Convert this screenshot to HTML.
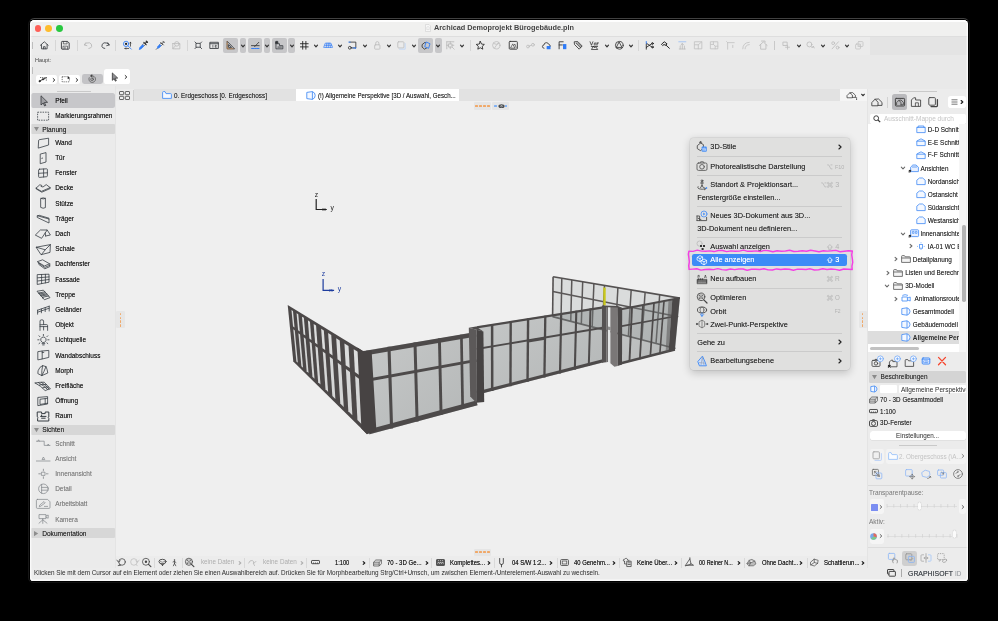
<!DOCTYPE html>
<html><head><meta charset="utf-8"><title>Archicad</title>
<style>
*{box-sizing:border-box;margin:0;padding:0}
html,body{width:998px;height:621px;overflow:hidden;background:#000;font-family:"Liberation Sans",sans-serif;}
.a{position:absolute}
.t{white-space:nowrap}
svg{overflow:visible}
#win{position:absolute;left:28px;top:18px;width:942px;height:565px;border-radius:6.5px 6.5px 5.5px 5.5px;background:#000;border:1px solid;border-color:#404040 #171717 #101010 #171717}
#wi{position:absolute;left:30px;top:20px;width:938px;height:561px;border-radius:4.6px 4.6px 3.6px 3.6px;background:#ececec;overflow:hidden}
#o{position:absolute;left:-30px;top:-20px;width:998px;height:621px;will-change:transform;opacity:0.9999}
#ring{position:absolute;left:0;top:0;width:938px;height:561px;border-radius:4.6px 4.6px 3.6px 3.6px;box-shadow:inset 0 0 0 1.4px rgba(255,255,255,.72);pointer-events:none}
</style></head><body>
<div id="win"></div>
<div id="wi"><div id="o">
<div class="a" style="left:30.00px;top:20.00px;width:938.00px;height:16.40px;background:#f0f0ef;border-radius:0px;"></div>
<div class="a" style="left:30.00px;top:20.00px;width:938.00px;height:1.60px;background:#fcfcfc;border-radius:0px;"></div>
<div class="a" style="left:30.00px;top:36.20px;width:938.00px;height:0.80px;background:#dedede;border-radius:0px;"></div>
<div class="a" style="left:34.6px;top:25.0px;width:6.8px;height:6.8px;border-radius:50%;background:#fe5f57"></div>
<div class="a" style="left:45.4px;top:25.0px;width:6.8px;height:6.8px;border-radius:50%;background:#febc2e"></div>
<div class="a" style="left:56.2px;top:25.0px;width:6.8px;height:6.8px;border-radius:50%;background:#28c840"></div>
<div class="a" style="left:30.00px;top:37.00px;width:938.00px;height:18.00px;background:#ebebeb;border-radius:0px;"></div>
<div class="a" style="left:869.50px;top:37.00px;width:98.50px;height:18.00px;background:#e4e4e4;border-radius:0px;"></div>
<div class="a" style="left:30.00px;top:55.00px;width:938.00px;height:34.00px;background:#e9e9e9;border-radius:0px;"></div>
<div class="a" style="left:115.80px;top:101.00px;width:751.70px;height:455.00px;background:#efefef;border-radius:0px;"></div>
<svg class="a" style="left:425px;top:24px" width="6" height="8" viewBox="0 0 6 8" fill="#f7f7f7" stroke="#c9c9c9" stroke-width="0.5"><path d="M0.5 0.5 H4 L5.5 2 V7.5 H0.5 Z"/><path d="M1.8 3.2 L3 2.4 L4.2 3.2 V5.6 H1.8 Z" stroke="#cfcfcf" fill="none"/></svg>
<div class="a t" style="left:434.00px;top:24.42px;height:8.76px;line-height:8.76px;font-size:7.3px;color:#444444;font-weight:bold;transform:scaleX(1.0004);transform-origin:left center;">Archicad Demoprojekt Bürogebäude.pln</div>
<div class="a" style="left:32.30px;top:41.50px;width:0.70px;height:7.50px;background:#bdbdbd;border-radius:0px;"></div>
<div class="a" style="left:32.30px;top:66.50px;width:0.70px;height:7.50px;background:#bdbdbd;border-radius:0px;"></div>
<svg class="a" style="left:38.80px;top:40.20px;" width="10.6" height="10.6" viewBox="0 0 12 12" fill="none" stroke="#3a3d42" stroke-width="0.95" stroke-linecap="round" stroke-linejoin="round"><path d="M1.6 6 L6 2 L10.4 6 M2.8 5.2 V10 H9.2 V5.2 M5 10 V7.6 H7 V10"/></svg>
<div class="a" style="left:54.80px;top:40.00px;width:0.80px;height:10.50px;background:#d6d6d6;border-radius:0px;"></div>
<svg class="a" style="left:60.20px;top:40.20px;" width="10.6" height="10.6" viewBox="0 0 12 12" fill="none" stroke="#3a3d42" stroke-width="0.95" stroke-linecap="round" stroke-linejoin="round"><path d="M1.6 2.4 Q1.6 1.6 2.4 1.6 H8.6 L10.4 3.4 V9.6 Q10.4 10.4 9.6 10.4 H2.4 Q1.6 10.4 1.6 9.6 Z" stroke-width="1.05"/><path d="M3.8 1.8 V4.4 H8 V1.8 M3.4 10.2 V7 H8.6 V10.2" stroke-width="0.75"/><path d="M5.6 8.2 V10" stroke-width="1.2" stroke-linecap="butt"/></svg>
<div class="a" style="left:76.90px;top:40.00px;width:0.80px;height:10.50px;background:#d6d6d6;border-radius:0px;"></div>
<svg class="a" style="left:83.00px;top:40.20px;" width="10.6" height="10.6" viewBox="0 0 12 12" fill="none" stroke="#b4b4b4" stroke-width="0.95" stroke-linecap="round" stroke-linejoin="round"><path d="M3.2 3 L1.4 5.6 L4.4 6.4 M1.6 5.4 Q4 2.4 7.4 3.2 Q10.4 4.4 9.8 7.4 Q9 9.6 6.6 9.6"/></svg>
<svg class="a" style="left:99.50px;top:40.20px;" width="10.6" height="10.6" viewBox="0 0 12 12" fill="none" stroke="#3a3d42" stroke-width="0.95" stroke-linecap="round" stroke-linejoin="round"><path d="M8.8 3 L10.6 5.6 L7.6 6.4 M10.4 5.4 Q8 2.4 4.6 3.2 Q1.6 4.4 2.2 7.4 Q3 9.6 5.4 9.6"/></svg>
<div class="a" style="left:115.20px;top:40.00px;width:0.80px;height:10.50px;background:#d6d6d6;border-radius:0px;"></div>
<svg class="a" style="left:121.50px;top:40.20px;" width="10.6" height="10.6" viewBox="0 0 12 12" fill="none" stroke="#3a3d42" stroke-width="0.95" stroke-linecap="round" stroke-linejoin="round"><circle cx="4.6" cy="4.4" r="3" stroke="#2f7bf6"/><path d="M6.8 6.6 L10.6 10.4" stroke="#2f7bf6"/><circle cx="4.6" cy="4.4" r="1.3" fill="#222" stroke="none"/><path d="M9.6 2.6 V7 M8.8 3.4 L9.6 2.6 L10.4 3.4 M3.4 9.6 H7.6 M4.2 8.8 L3.4 9.6 L4.2 10.4" stroke="#222" stroke-width="0.8"/></svg>
<svg class="a" style="left:137.70px;top:40.20px;" width="10.6" height="10.6" viewBox="0 0 12 12" fill="none" stroke="#3a3d42" stroke-width="0.95" stroke-linecap="round" stroke-linejoin="round"><path d="M5.2 5.4 L7.4 3.2 L8.8 4.6 L6.6 6.8" fill="#fff" stroke="#333" stroke-width="0.8"/><path d="M1.6 10.4 L2.2 8.4 L5.2 5.4 L6.6 6.8 L3.6 9.8 Z" fill="#2f7bf6" stroke="#2f7bf6"/><path d="M6.6 2.6 L9.4 5.4 M8.2 3.8 L10 2" stroke="#333" stroke-width="1.2"/><path d="M9.4 1.4 L10.6 2.6" stroke="#333" stroke-width="1.6"/></svg>
<svg class="a" style="left:154.50px;top:40.20px;" width="10.6" height="10.6" viewBox="0 0 12 12" fill="none" stroke="#3a3d42" stroke-width="0.95" stroke-linecap="round" stroke-linejoin="round"><path d="M1.4 10.6 L3 9" stroke="#333" stroke-width="0.8"/><path d="M5.4 5.2 L7.2 3.4 L8.6 4.8 L6.8 6.6" fill="#fff" stroke="#333" stroke-width="0.8"/><path d="M3 9 L3.2 7.4 L5.4 5.2 L6.8 6.6 L4.6 8.8 Z" fill="#2f7bf6" stroke="#2f7bf6"/><path d="M6.4 2.6 L9.4 5.6 M8 4 L9.8 2.2 M9 1.4 L10.6 3" stroke="#333" stroke-width="0.9"/></svg>
<svg class="a" style="left:170.50px;top:40.20px;" width="10.6" height="10.6" viewBox="0 0 12 12" fill="none" stroke="#bcbcbc" stroke-width="0.95" stroke-linecap="round" stroke-linejoin="round"><path d="M2 4 H10 V10 H2 Z" stroke-dasharray="1 0.8"/><circle cx="6.6" cy="4.4" r="2.6"/><path d="M2 10 L5 6.6"/></svg>
<div class="a" style="left:186.50px;top:40.00px;width:0.80px;height:10.50px;background:#d6d6d6;border-radius:0px;"></div>
<svg class="a" style="left:192.70px;top:40.20px;" width="10.6" height="10.6" viewBox="0 0 12 12" fill="none" stroke="#3a3d42" stroke-width="0.95" stroke-linecap="round" stroke-linejoin="round"><rect x="3.8" y="3.8" width="4.4" height="4.4"/><path d="M3.8 3.8 L2.2 2.2 M8.2 3.8 L9.8 2.2 M3.8 8.2 L2.2 9.8 M8.2 8.2 L9.8 9.8"/></svg>
<svg class="a" style="left:208.90px;top:40.20px;" width="10.6" height="10.6" viewBox="0 0 12 12" fill="none" stroke="#3a3d42" stroke-width="0.95" stroke-linecap="round" stroke-linejoin="round"><path d="M1.4 2.6 H10.6 V9.6 H1.4 Z M1.4 4.2 H10.6" stroke-width="1"/><path d="M4.4 5.8 V8.2 M7 6 H8.2 V7 H7 V8.2 H8.2" stroke-width="0.8"/></svg>
<div class="a" style="left:223.00px;top:38.20px;width:14.80px;height:14.40px;background:#c7c7c9;border-radius:2px;"></div>
<div class="a" style="left:239.50px;top:38.20px;width:6.40px;height:14.40px;background:#c7c7c9;border-radius:2px;"></div>
<div class="a" style="left:248.00px;top:38.20px;width:13.90px;height:14.40px;background:#c7c7c9;border-radius:2px;"></div>
<div class="a" style="left:264.10px;top:38.20px;width:6.30px;height:14.40px;background:#c7c7c9;border-radius:2px;"></div>
<div class="a" style="left:272.10px;top:38.20px;width:14.90px;height:14.40px;background:#c7c7c9;border-radius:2px;"></div>
<div class="a" style="left:288.20px;top:38.20px;width:6.80px;height:14.40px;background:#c7c7c9;border-radius:2px;"></div>
<div class="a" style="left:418.30px;top:38.20px;width:15.10px;height:14.40px;background:#c7c7c9;border-radius:2px;"></div>
<div class="a" style="left:435.00px;top:38.20px;width:6.90px;height:14.40px;background:#c7c7c9;border-radius:2px;"></div>
<svg class="a" style="left:225.10px;top:40.20px;" width="10.6" height="10.6" viewBox="0 0 12 12" fill="none" stroke="#3a3d42" stroke-width="0.95" stroke-linecap="round" stroke-linejoin="round"><path d="M2.4 1.8 V10 H10.4 Z M4 5.6 V8.4 H7 Z"/><path d="M2.4 1.8 V10 H10.4" stroke="#e8903a" stroke-dasharray="0.8 0.8" stroke-linecap="butt" stroke-width="1.1"/></svg>
<svg class="a" style="left:239.60px;top:42.70px" width="6" height="6" viewBox="0 0 6 6" fill="none" stroke="#333" stroke-width="1.2" stroke-linecap="round" stroke-linejoin="round"><path d="M1.52 2.186 L3 3.814 L4.48 2.186"/></svg>
<svg class="a" style="left:249.70px;top:40.20px;" width="10.6" height="10.6" viewBox="0 0 12 12" fill="none" stroke="#3a3d42" stroke-width="0.95" stroke-linecap="round" stroke-linejoin="round"><path d="M1.6 6.4 H10.4 M5.2 7.6 L10 2.6" stroke="#333"/><path d="M1.8 9.6 H10.2" stroke="#2f7bf6" stroke-dasharray="1.2 0.7" stroke-width="1.1"/></svg>
<svg class="a" style="left:264.00px;top:42.70px" width="6" height="6" viewBox="0 0 6 6" fill="none" stroke="#333" stroke-width="1.2" stroke-linecap="round" stroke-linejoin="round"><path d="M1.52 2.186 L3 3.814 L4.48 2.186"/></svg>
<svg class="a" style="left:274.20px;top:40.20px;" width="10.6" height="10.6" viewBox="0 0 12 12" fill="none" stroke="#3a3d42" stroke-width="0.95" stroke-linecap="round" stroke-linejoin="round"><path d="M2.2 2 V10 H10 V6.4 H6.2 V4.2 H4.2 V2 Z"/><path d="M2.2 2 H4.2 V4.2 H2.2 Z" fill="#333"/><path d="M4.4 8 H8.6" stroke-dasharray="0.8 0.8"/></svg>
<svg class="a" style="left:288.80px;top:42.70px" width="6" height="6" viewBox="0 0 6 6" fill="none" stroke="#333" stroke-width="1.2" stroke-linecap="round" stroke-linejoin="round"><path d="M1.52 2.186 L3 3.814 L4.48 2.186"/></svg>
<svg class="a" style="left:298.60px;top:40.20px;" width="10.6" height="10.6" viewBox="0 0 12 12" fill="none" stroke="#3a3d42" stroke-width="0.95" stroke-linecap="round" stroke-linejoin="round"><path d="M4.2 1.6 V10.4 M7.8 1.6 V10.4 M1.6 4.2 H10.4 M1.6 7.8 H10.4" stroke="#222" stroke-width="1"/></svg>
<svg class="a" style="left:312.90px;top:42.70px" width="6" height="6" viewBox="0 0 6 6" fill="none" stroke="#333" stroke-width="1.2" stroke-linecap="round" stroke-linejoin="round"><path d="M1.52 2.186 L3 3.814 L4.48 2.186"/></svg>
<svg class="a" style="left:323.10px;top:40.20px;" width="10.6" height="10.6" viewBox="0 0 12 12" fill="none" stroke="#3a3d42" stroke-width="0.95" stroke-linecap="round" stroke-linejoin="round"><path d="M3 3.6 H9 L10.8 8.4 H1.2 Z M4.4 3.6 L3.6 8.4 M6 3.6 V8.4 M7.6 3.6 L8.4 8.4 M2.2 6 H9.8" stroke="#2f7bf6" stroke-width="0.8"/></svg>
<svg class="a" style="left:337.20px;top:42.70px" width="6" height="6" viewBox="0 0 6 6" fill="none" stroke="#333" stroke-width="1.2" stroke-linecap="round" stroke-linejoin="round"><path d="M1.52 2.186 L3 3.814 L4.48 2.186"/></svg>
<svg class="a" style="left:346.90px;top:40.20px;" width="10.6" height="10.6" viewBox="0 0 12 12" fill="none" stroke="#3a3d42" stroke-width="0.95" stroke-linecap="round" stroke-linejoin="round"><path d="M3 2.4 H10 V9 H5" stroke="#333"/><circle cx="3.2" cy="8.8" r="1.6" stroke="#333"/><path d="M2 2.4 H3.6" stroke="#2f7bf6"/><circle cx="9.6" cy="9.2" r="0.9" fill="#2f7bf6" stroke="none"/><path d="M6.6 9 H8.4" stroke="#2f7bf6"/></svg>
<svg class="a" style="left:361.70px;top:42.70px" width="6" height="6" viewBox="0 0 6 6" fill="none" stroke="#333" stroke-width="1.2" stroke-linecap="round" stroke-linejoin="round"><path d="M1.52 2.186 L3 3.814 L4.48 2.186"/></svg>
<svg class="a" style="left:372.00px;top:40.20px;" width="10.6" height="10.6" viewBox="0 0 12 12" fill="none" stroke="#bdbdbd" stroke-width="0.95" stroke-linecap="round" stroke-linejoin="round"><rect x="3" y="5.4" width="6" height="5" rx="0.8"/><path d="M4.2 5.4 V3.6 Q4.2 1.8 6 1.8 Q7.8 1.8 7.8 3.6 V5.4"/></svg>
<svg class="a" style="left:386.00px;top:42.70px" width="6" height="6" viewBox="0 0 6 6" fill="none" stroke="#333" stroke-width="1.2" stroke-linecap="round" stroke-linejoin="round"><path d="M1.52 2.186 L3 3.814 L4.48 2.186"/></svg>
<svg class="a" style="left:395.70px;top:40.20px;" width="10.6" height="10.6" viewBox="0 0 12 12" fill="none" stroke="#3a3d42" stroke-width="0.95" stroke-linecap="round" stroke-linejoin="round"><rect x="2" y="2" width="7" height="7" rx="1" stroke="#bdbdbd"/><path d="M10.4 4 V10.4 H4" stroke="#bcd4f5"/></svg>
<svg class="a" style="left:410.60px;top:42.70px" width="6" height="6" viewBox="0 0 6 6" fill="none" stroke="#333" stroke-width="1.2" stroke-linecap="round" stroke-linejoin="round"><path d="M1.52 2.186 L3 3.814 L4.48 2.186"/></svg>
<svg class="a" style="left:420.50px;top:40.20px;" width="10.6" height="10.6" viewBox="0 0 12 12" fill="none" stroke="#3a3d42" stroke-width="0.95" stroke-linecap="round" stroke-linejoin="round"><path d="M1.6 5 L4.6 2.6 L7 4.4 V8.6 L4 10.4 L1.6 8.4 Z" stroke="#333"/><path d="M6.2 2.4 L10.2 4.2 L8.6 9.4 L4.6 7.8 Z" stroke="#2f7bf6" fill="#c7c7c9" stroke-width="1"/></svg>
<svg class="a" style="left:435.40px;top:42.70px" width="6" height="6" viewBox="0 0 6 6" fill="none" stroke="#333" stroke-width="1.2" stroke-linecap="round" stroke-linejoin="round"><path d="M1.52 2.186 L3 3.814 L4.48 2.186"/></svg>
<svg class="a" style="left:445.10px;top:40.20px;" width="10.6" height="10.6" viewBox="0 0 12 12" fill="none" stroke="#b8b8b8" stroke-width="0.95" stroke-linecap="round" stroke-linejoin="round"><path d="M2 2 H10 M2 2 V10 M4 4.4 H8 V8 H4 Z M6 4.4 V2 M6 8 V10 M4 6 H2 M8 6 H10 M8.4 8.4 L10.4 10.4" stroke-dasharray="1.2 0.7"/></svg>
<svg class="a" style="left:459.40px;top:42.70px" width="6" height="6" viewBox="0 0 6 6" fill="none" stroke="#333" stroke-width="1.2" stroke-linecap="round" stroke-linejoin="round"><path d="M1.52 2.186 L3 3.814 L4.48 2.186"/></svg>
<div class="a" style="left:469.60px;top:40.00px;width:0.80px;height:10.50px;background:#d6d6d6;border-radius:0px;"></div>
<svg class="a" style="left:475.20px;top:40.20px;" width="10.6" height="10.6" viewBox="0 0 12 12" fill="none" stroke="#3a3d42" stroke-width="0.95" stroke-linecap="round" stroke-linejoin="round"><path d="M6 1.6 L7.4 4.6 L10.6 5 L8.2 7.2 L8.8 10.4 L6 8.8 L3.2 10.4 L3.8 7.2 L1.4 5 L4.6 4.6 Z" stroke="#222"/></svg>
<svg class="a" style="left:491.40px;top:40.20px;" width="10.6" height="10.6" viewBox="0 0 12 12" fill="none" stroke="#c0c0c0" stroke-width="0.95" stroke-linecap="round" stroke-linejoin="round"><circle cx="6" cy="6" r="4.2"/><path d="M3 4 Q6 6 9 4 M4 9 Q6 6 8.6 3"/></svg>
<svg class="a" style="left:508.00px;top:40.20px;" width="10.6" height="10.6" viewBox="0 0 12 12" fill="none" stroke="#3a3d42" stroke-width="0.95" stroke-linecap="round" stroke-linejoin="round"><rect x="1.4" y="1.6" width="9.2" height="8.8" rx="1" stroke="#333" stroke-width="1"/><path d="M3 8.8 L5.4 4.4 L7.6 8.8 Z M6.6 6 L7.8 4.6 L9.2 8.6" stroke="#333" stroke-width="0.7"/></svg>
<svg class="a" style="left:524.70px;top:40.20px;" width="10.6" height="10.6" viewBox="0 0 12 12" fill="none" stroke="#bdbdbd" stroke-width="0.95" stroke-linecap="round" stroke-linejoin="round"><circle cx="3.4" cy="7.4" r="1.6"/><circle cx="9" cy="5.4" r="1.6"/><path d="M4.8 6.8 L7.6 5.8"/></svg>
<svg class="a" style="left:540.50px;top:40.20px;" width="10.6" height="10.6" viewBox="0 0 12 12" fill="none" stroke="#3a3d42" stroke-width="0.95" stroke-linecap="round" stroke-linejoin="round"><path d="M3.4 9.4 Q1.4 9.2 1.6 7.2 Q1.8 5.6 3.4 5.6 Q3.6 3 6 3 Q8.2 3 8.8 5 Q10.6 5.2 10.6 7" stroke="#333"/><rect x="6.4" y="6.8" width="4.4" height="3.8" rx="0.6" fill="#2f7bf6" stroke="none"/></svg>
<svg class="a" style="left:556.70px;top:40.20px;" width="10.6" height="10.6" viewBox="0 0 12 12" fill="none" stroke="#3a3d42" stroke-width="0.95" stroke-linecap="round" stroke-linejoin="round"><path d="M2.4 10 V2 H7 M2.4 5.6 H6" stroke="#333" stroke-width="1"/><rect x="6.8" y="4.6" width="3.8" height="5.8" fill="#2f7bf6" stroke="none"/></svg>
<svg class="a" style="left:572.90px;top:40.20px;" width="10.6" height="10.6" viewBox="0 0 12 12" fill="none" stroke="#3a3d42" stroke-width="0.95" stroke-linecap="round" stroke-linejoin="round"><path d="M1.8 2 L5.4 1.8 L10.4 6.8 L7 10.4 L2 5.4 Z M3.4 3.6 L8.6 8.8 M4.8 3 L9.4 7.6" stroke="#333"/></svg>
<svg class="a" style="left:589.40px;top:40.20px;" width="10.6" height="10.6" viewBox="0 0 12 12" fill="none" stroke="#3a3d42" stroke-width="0.95" stroke-linecap="round" stroke-linejoin="round"><path d="M1.2 2 L2.8 6 L4.4 2 M6 5.8 V3.6 Q6.8 2.6 7.8 3.6 V5.8 M9.2 3 V5.8 M9.2 4 Q9.8 3 10.8 3.2" stroke="#222" stroke-width="0.8"/><path d="M3 10.4 L5 7 L6.4 9 L7.6 7.6 L9.6 10.4 Z M2.6 7.4 H9.8" stroke="#222" stroke-width="0.8"/></svg>
<svg class="a" style="left:604.00px;top:42.70px" width="6" height="6" viewBox="0 0 6 6" fill="none" stroke="#333" stroke-width="1.2" stroke-linecap="round" stroke-linejoin="round"><path d="M1.52 2.186 L3 3.814 L4.48 2.186"/></svg>
<svg class="a" style="left:613.70px;top:40.20px;" width="10.6" height="10.6" viewBox="0 0 12 12" fill="none" stroke="#3a3d42" stroke-width="0.95" stroke-linecap="round" stroke-linejoin="round"><circle cx="6" cy="6" r="4.4" stroke="#333"/><path d="M6 2.6 L9 8.4 H3 Z" stroke="#333"/></svg>
<svg class="a" style="left:628.30px;top:42.70px" width="6" height="6" viewBox="0 0 6 6" fill="none" stroke="#333" stroke-width="1.2" stroke-linecap="round" stroke-linejoin="round"><path d="M1.52 2.186 L3 3.814 L4.48 2.186"/></svg>
<div class="a" style="left:638.10px;top:40.00px;width:0.80px;height:10.50px;background:#d6d6d6;border-radius:0px;"></div>
<svg class="a" style="left:644.20px;top:40.20px;" width="10.6" height="10.6" viewBox="0 0 12 12" fill="none" stroke="#3a3d42" stroke-width="0.95" stroke-linecap="round" stroke-linejoin="round"><path d="M2.6 3.6 L9.6 8.4 M2.6 8.4 L9.6 3.6" stroke="#222"/><circle cx="9.6" cy="4" r="1" stroke="#222"/><circle cx="9.6" cy="8" r="1" stroke="#222"/><path d="M2.6 1.6 V4" stroke="#2f7bf6"/><path d="M2.6 5 V10.4" stroke="#222"/></svg>
<svg class="a" style="left:660.00px;top:40.20px;" width="10.6" height="10.6" viewBox="0 0 12 12" fill="none" stroke="#3a3d42" stroke-width="0.95" stroke-linecap="round" stroke-linejoin="round"><path d="M2 4.6 L4.8 2 L8 4.4 L6.2 6.2 L4.6 5 L3.4 6 Z M6.6 5.6 L10.6 9.4" stroke="#222" stroke-width="1.1"/></svg>
<svg class="a" style="left:676.70px;top:40.20px;" width="10.6" height="10.6" viewBox="0 0 12 12" fill="none" stroke="#3a3d42" stroke-width="0.95" stroke-linecap="round" stroke-linejoin="round"><path d="M2 2 H10" stroke="#9cc0f5"/><path d="M6 4 V10 M4.4 5.6 L6 4 L7.6 5.6 M2.6 10.2 H9.4 M3.6 7 V10 M8.4 7 V10" stroke="#bcbcbc"/></svg>
<svg class="a" style="left:692.70px;top:40.20px;" width="10.6" height="10.6" viewBox="0 0 12 12" fill="none" stroke="#c2c2c2" stroke-width="0.95" stroke-linecap="round" stroke-linejoin="round"><path d="M2 2 H10 V10 H2 Z M2 5.4 H6 V10 M6 5.4 L10 2"/></svg>
<svg class="a" style="left:709.10px;top:40.20px;" width="10.6" height="10.6" viewBox="0 0 12 12" fill="none" stroke="#c2c2c2" stroke-width="0.95" stroke-linecap="round" stroke-linejoin="round"><path d="M2 2 H10 V10 H2 Z M2 5 H5 V2 M7 10 V7 H10 M5 5 L7 7"/></svg>
<svg class="a" style="left:725.20px;top:40.20px;" width="10.6" height="10.6" viewBox="0 0 12 12" fill="none" stroke="#c2c2c2" stroke-width="0.95" stroke-linecap="round" stroke-linejoin="round"><path d="M3 10.4 V3 H10.4 M3 3 L1.8 1.8 M8.8 6 V8.6"/></svg>
<svg class="a" style="left:741.40px;top:40.20px;" width="10.6" height="10.6" viewBox="0 0 12 12" fill="none" stroke="#c2c2c2" stroke-width="0.95" stroke-linecap="round" stroke-linejoin="round"><path d="M2 10 Q2 3 9.4 2.6 M4.6 10 Q4.8 5.4 9.4 5.2"/></svg>
<svg class="a" style="left:758.20px;top:40.20px;" width="10.6" height="10.6" viewBox="0 0 12 12" fill="none" stroke="#bdbdbd" stroke-width="0.95" stroke-linecap="round" stroke-linejoin="round"><path d="M1.6 6.2 L6 2.2 L10.4 6.2 M3 5.2 V10.4 H9 V5.2 M4 1.2 H8 V2.6"/></svg>
<div class="a" style="left:774.40px;top:41.00px;width:0.80px;height:8.50px;background:#c9c9c9;border-radius:0px;"></div>
<svg class="a" style="left:780.70px;top:40.20px;" width="10.6" height="10.6" viewBox="0 0 12 12" fill="none" stroke="#bdbdbd" stroke-width="0.95" stroke-linecap="round" stroke-linejoin="round"><path d="M2.6 2.4 H7 V6.2 H2.6 Z"/><path d="M7.4 6 V10.4 M5.2 8.2 H9.6"/></svg>
<svg class="a" style="left:795.60px;top:42.70px" width="6" height="6" viewBox="0 0 6 6" fill="none" stroke="#333" stroke-width="1.2" stroke-linecap="round" stroke-linejoin="round"><path d="M1.52 2.186 L3 3.814 L4.48 2.186"/></svg>
<svg class="a" style="left:804.70px;top:40.20px;" width="10.6" height="10.6" viewBox="0 0 12 12" fill="none" stroke="#bdbdbd" stroke-width="0.95" stroke-linecap="round" stroke-linejoin="round"><circle cx="5" cy="5" r="2.8"/><path d="M7 8 Q8.6 9.6 9.8 7.6 M9.8 7.6 L10.4 9 M9.8 7.6 L8.4 7.8"/></svg>
<svg class="a" style="left:819.60px;top:42.70px" width="6" height="6" viewBox="0 0 6 6" fill="none" stroke="#333" stroke-width="1.2" stroke-linecap="round" stroke-linejoin="round"><path d="M1.52 2.186 L3 3.814 L4.48 2.186"/></svg>
<svg class="a" style="left:829.70px;top:40.20px;" width="10.6" height="10.6" viewBox="0 0 12 12" fill="none" stroke="#bdbdbd" stroke-width="0.95" stroke-linecap="round" stroke-linejoin="round"><path d="M2.4 10 L9.6 2"/><circle cx="3.6" cy="3.6" r="1.6"/><circle cx="8.6" cy="8.6" r="1.6"/></svg>
<svg class="a" style="left:844.20px;top:42.70px" width="6" height="6" viewBox="0 0 6 6" fill="none" stroke="#333" stroke-width="1.2" stroke-linecap="round" stroke-linejoin="round"><path d="M1.52 2.186 L3 3.814 L4.48 2.186"/></svg>
<svg class="a" style="left:853.70px;top:40.20px;" width="10.6" height="10.6" viewBox="0 0 12 12" fill="none" stroke="#c6c6c6" stroke-width="0.95" stroke-linecap="round" stroke-linejoin="round"><rect x="1.8" y="4.6" width="5.6" height="5.6" rx="1"/><rect x="4.6" y="1.8" width="5.6" height="5.6" rx="1"/><path d="M4.6 7.4 L7.4 4.6"/></svg>
<div class="a t" style="left:35.00px;top:57.18px;height:6.84px;line-height:6.84px;font-size:5.7px;color:#444;font-weight:normal;transform:scaleX(0.9646);transform-origin:left center;">Haupt:</div>
<div class="a" style="left:36.30px;top:74.90px;width:20.70px;height:9.00px;background:#fff;border-radius:2.2px;"></div>
<div class="a" style="left:58.90px;top:74.90px;width:21.00px;height:9.00px;background:#fff;border-radius:2.2px;"></div>
<div class="a" style="left:81.70px;top:74.40px;width:21.30px;height:9.50px;background:#c3c3c6;border-radius:2.4px;"></div>
<div class="a" style="left:104.30px;top:69.20px;width:25.70px;height:14.70px;background:#fff;border-radius:2.6px;"></div>
<svg class="a" style="left:38.30px;top:74.40px;" width="10" height="10" viewBox="0 0 12 12" fill="none" stroke="#333" stroke-width="0.8" stroke-linecap="round" stroke-linejoin="round"><path d="M1.6 8.6 L10 4.4" stroke-width="1.1"/><path d="M2.4 4.2 H10 V8.4" stroke-dasharray="1.3 0.9" stroke-linecap="butt"/><circle cx="2" cy="8.6" r="0.9" fill="#222"/><circle cx="6" cy="6.4" r="0.9" fill="#222"/></svg>
<svg class="a" style="left:50.60px;top:76.60px" width="6" height="6" viewBox="0 0 6 6" fill="none" stroke="#222" stroke-width="0.95" stroke-linecap="round" stroke-linejoin="round"><path d="M2.186 1.52 L3.814 3 L2.186 4.48"/></svg>
<svg class="a" style="left:61.20px;top:74.30px;" width="10" height="10" viewBox="0 0 12 12" fill="none" stroke="#333" stroke-width="0.8" stroke-linecap="round" stroke-linejoin="round"><path d="M1.4 3.2 H7.4 M1.4 3.2 V9.4 H10 V7.8" stroke-dasharray="1.5 1.1" stroke-linecap="butt"/><path d="M8 2 V6.4 L9 5.4 L9.8 7 L10.5 6.6 L9.8 5.2 L11 5 Z" fill="#222" stroke="none"/></svg>
<svg class="a" style="left:73.70px;top:76.60px" width="6" height="6" viewBox="0 0 6 6" fill="none" stroke="#222" stroke-width="0.95" stroke-linecap="round" stroke-linejoin="round"><path d="M2.186 1.52 L3.814 3 L2.186 4.48"/></svg>
<svg class="a" style="left:87.30px;top:74.40px;" width="10" height="10" viewBox="0 0 12 12" fill="none" stroke="#444" stroke-width="0.8" stroke-linecap="round" stroke-linejoin="round"><path d="M5.4 2.2 A4 4 0 1 1 2.6 4.4" /><path d="M5.8 0.8 L3.8 2.4 L6 3.6 Z" fill="#333" stroke-width="0.5"/><circle cx="6" cy="6.4" r="1.7" stroke-width="0.7"/><path d="M6 6.4 L7.6 4.6" stroke-width="0.7"/></svg>
<svg class="a" style="left:108.50px;top:71.60px;" width="10" height="10" viewBox="0 0 12 12" fill="none" stroke="#3a3a3a" stroke-width="0.9" stroke-linecap="round" stroke-linejoin="round"><path d="M4 1.6 L4 10 L6.2 8 L7.6 11 L8.8 10.4 L7.4 7.5 L10 7.3 Z" fill="#8f8f93" stroke="#2a2a2a"/></svg>
<svg class="a" style="left:123.40px;top:73.60px" width="6" height="6" viewBox="0 0 6 6" fill="none" stroke="#222" stroke-width="0.95" stroke-linecap="round" stroke-linejoin="round"><path d="M2.186 1.52 L3.814 3 L2.186 4.48"/></svg>
<div class="a" style="left:115.80px;top:89.00px;width:751.70px;height:12.00px;background:#e2e2e2;border-radius:0px;"></div>
<div class="a" style="left:115.80px;top:89.00px;width:17.80px;height:12.00px;background:#ececec;border-radius:0px;"></div>
<div class="a" style="left:133.20px;top:89.50px;width:0.80px;height:11.00px;background:#cfcfcf;border-radius:0px;"></div>
<svg class="a" style="left:119.00px;top:90.60px;" width="11" height="9" viewBox="0 0 11 9"><g fill="none" stroke="#555" stroke-width="0.9"><rect x="0.5" y="0.5" width="4.2" height="3.2" rx="0.5"/><rect x="6.3" y="0.5" width="4.2" height="3.2" rx="0.5"/><rect x="0.5" y="5.3" width="4.2" height="3.2" rx="0.5"/><rect x="6.3" y="5.3" width="4.2" height="3.2" rx="0.5"/></g></svg>
<svg class="a" style="left:162.30px;top:91.00px;" width="10" height="8" viewBox="0 0 10 8"><path d="M0.6 7.4 V1.4 Q0.6 0.6 1.4 0.6 H3 L4 2.6 H8.6 Q9.4 2.6 9.4 3.4 V7.4 Z" fill="#f4f8ff" stroke="#4a90f5" stroke-width="0.9"/></svg>
<div class="a t" style="left:174.00px;top:91.69px;height:7.62px;line-height:7.62px;font-size:6.35px;color:#2e2e2e;font-weight:normal;transform:scaleX(1.0018);transform-origin:left center;text-shadow:0 0 0.25px rgba(0,0,0,.5);">0. Erdgeschoss [0. Erdgeschoss]</div>
<div class="a" style="left:296.30px;top:89.00px;width:162.90px;height:12.00px;background:#fff;border-radius:0px;"></div>
<svg class="a" style="left:306.20px;top:90.80px;" width="10" height="9" viewBox="0 0 10 9"><path d="M0.8 1.4 L6.4 0.6 V8.4 L0.8 7.6 Z M6.4 0.6 Q9.2 1.6 9.2 4.4 Q9.2 7.4 6.4 8.4" fill="#f4f8ff" stroke="#4a90f5" stroke-width="0.9"/></svg>
<div class="a t" style="left:317.60px;top:91.72px;height:7.56px;line-height:7.56px;font-size:6.3px;color:#2e2e2e;font-weight:normal;transform:scaleX(0.9814);transform-origin:left center;text-shadow:0 0 0.25px rgba(0,0,0,.5);">(!) Allgemeine Perspektive [3D / Auswahl, Gesch...</div>
<div class="a" style="left:840.20px;top:89.00px;width:27.30px;height:12.00px;background:#f5f5f5;border-radius:0px;"></div>
<svg class="a" style="left:845.50px;top:89.00px;" width="12" height="12" viewBox="0 0 12 12" fill="none" stroke="#444" stroke-width="0.9" stroke-linecap="round" stroke-linejoin="round"><path d="M1 8.4 L1 6.6 L3.8 3.8 L6.4 6 V8.4 Z M3.8 3.8 L6.6 3.6 L9.4 6.2 V8.4 H6.4" stroke-width="0.8"/><path d="M10 8.6 h1.1 v0.9 h-1.1 z M10 10.2 h1.1 v0.9 h-1.1 z" fill="#333" stroke="none"/><path d="M9.4 8.4 L10 9" stroke-width="0.6"/></svg>
<svg class="a" style="left:860.20px;top:92.00px" width="6" height="6" viewBox="0 0 6 6" fill="none" stroke="#2a2a2a" stroke-width="1.25" stroke-linecap="round" stroke-linejoin="round"><path d="M1.76 2.318 L3 3.682 L4.24 2.318"/></svg>
<div class="a" style="left:474.30px;top:102.10px;width:16.70px;height:7.50px;background:#e5e5e5;border-radius:1.2px;"></div>
<div class="a" style="left:475.30px;top:105.40px;width:2.60px;height:1.40px;background:#f0a868;border-radius:0.5px;"></div>
<div class="a" style="left:479.20px;top:105.40px;width:2.60px;height:1.40px;background:#f0a868;border-radius:0.5px;"></div>
<div class="a" style="left:483.10px;top:105.40px;width:2.60px;height:1.40px;background:#f0a868;border-radius:0.5px;"></div>
<div class="a" style="left:487.00px;top:105.40px;width:2.60px;height:1.40px;background:#f0a868;border-radius:0.5px;"></div>
<div class="a" style="left:492.30px;top:102.10px;width:17.00px;height:7.50px;background:#e5e5e5;border-radius:1.2px;"></div>
<div class="a" style="left:494.30px;top:105.40px;width:2.60px;height:1.40px;background:#7fb0f3;border-radius:0.5px;"></div>
<div class="a" style="left:504.80px;top:105.40px;width:2.60px;height:1.40px;background:#7fb0f3;border-radius:0.5px;"></div>
<svg class="a" style="left:497.60px;top:103.90px;" width="7" height="4.4" viewBox="0 0 7 4.4"><ellipse cx="3.5" cy="2.2" rx="3.1" ry="1.9" fill="#4a4d50"/><circle cx="3.5" cy="2.3" r="1" fill="#e5e5e5"/><circle cx="3.5" cy="2.3" r="0.5" fill="#4a4d50"/></svg>
<svg class="a" style="left:270.00px;top:260.00px;" width="430" height="200" viewBox="0 0 430 200"><defs><linearGradient id="gl" x1="0" y1="0" x2="1" y2="1"><stop offset="0" stop-color="rgb(124,130,130)" stop-opacity="0.36"/><stop offset="1" stop-color="rgb(112,118,118)" stop-opacity="0.47"/></linearGradient></defs><polygon points="283.10,16.70 409.80,38.10 405.50,88.50 282.60,56.60" fill="rgba(165,172,172,0.28)" /><line x1="291.80" y1="18.17" x2="291.04" y2="58.79" stroke="#5a5757" stroke-width="1.50"/><line x1="301.80" y1="19.86" x2="300.74" y2="61.31" stroke="#5a5757" stroke-width="1.50"/><line x1="312.70" y1="21.70" x2="311.31" y2="64.05" stroke="#5a5757" stroke-width="1.50"/><line x1="323.90" y1="23.59" x2="322.18" y2="66.87" stroke="#5a5757" stroke-width="1.50"/><line x1="334.50" y1="25.38" x2="332.46" y2="69.54" stroke="#5a5757" stroke-width="1.50"/><line x1="347.90" y1="27.64" x2="345.46" y2="72.92" stroke="#5a5757" stroke-width="1.50"/><line x1="361.20" y1="29.89" x2="358.36" y2="76.26" stroke="#5a5757" stroke-width="1.50"/><line x1="375.10" y1="32.24" x2="371.84" y2="79.76" stroke="#5a5757" stroke-width="1.50"/><line x1="389.70" y1="34.71" x2="386.00" y2="83.44" stroke="#5a5757" stroke-width="1.50"/><line x1="282.92" y1="31.46" x2="408.21" y2="56.75" stroke="#5a5757" stroke-width="1.50"/><line x1="283.10" y1="16.70" x2="409.80" y2="38.10" stroke="#555252" stroke-width="1.60"/><line x1="282.60" y1="56.60" x2="405.50" y2="88.50" stroke="#5a5757" stroke-width="1.80"/><line x1="283.10" y1="16.70" x2="282.60" y2="56.60" stroke="#555252" stroke-width="1.60"/><polygon points="333.30,27.30 335.70,27.70 335.70,45.60 333.30,45.20" fill="#c9c81c" /><polygon points="351.00,49.20 409.80,38.10 404.80,90.20 349.00,104.60" fill="url(#gl)" /><line x1="362.00" y1="47.12" x2="359.44" y2="101.91" stroke="#4d4a4a" stroke-width="1.90"/><line x1="373.00" y1="45.05" x2="369.88" y2="99.21" stroke="#4d4a4a" stroke-width="1.80"/><line x1="384.00" y1="42.97" x2="380.32" y2="96.52" stroke="#4d4a4a" stroke-width="1.70"/><line x1="394.00" y1="41.08" x2="389.81" y2="94.07" stroke="#4d4a4a" stroke-width="1.60"/><line x1="350.38" y1="66.37" x2="408.10" y2="55.81" stroke="#4d4a4a" stroke-width="1.60"/><line x1="351.00" y1="49.20" x2="409.80" y2="38.10" stroke="#4d4a4a" stroke-width="2.00"/><line x1="349.03" y1="103.77" x2="404.88" y2="89.42" stroke="#4d4a4a" stroke-width="2.60"/><polygon points="402.30,39.40 409.80,38.10 404.80,90.20 398.60,91.80" fill="#4b4848" /><polygon points="398.50,40.60 402.30,39.40 398.60,91.80 395.60,92.60" fill="rgba(90,88,88,0.55)" /><polygon points="206.60,66.60 335.00,46.20 333.00,102.40 207.00,134.80" fill="url(#gl)" /><line x1="222.10" y1="64.14" x2="222.21" y2="130.89" stroke="#4d4a4a" stroke-width="2.50"/><line x1="240.70" y1="61.18" x2="240.46" y2="126.20" stroke="#4d4a4a" stroke-width="2.40"/><line x1="258.10" y1="58.42" x2="257.54" y2="121.80" stroke="#4d4a4a" stroke-width="2.40"/><line x1="275.30" y1="55.69" x2="274.42" y2="117.46" stroke="#4d4a4a" stroke-width="2.30"/><line x1="291.20" y1="53.16" x2="290.02" y2="113.45" stroke="#4d4a4a" stroke-width="2.20"/><line x1="306.30" y1="50.76" x2="304.84" y2="109.64" stroke="#4d4a4a" stroke-width="2.10"/><line x1="320.50" y1="48.50" x2="318.77" y2="106.06" stroke="#4d4a4a" stroke-width="2.00"/><line x1="206.73" y1="88.97" x2="334.24" y2="67.44" stroke="#4d4a4a" stroke-width="1.90"/><line x1="258.09" y1="81.33" x2="274.87" y2="78.56" stroke="#4d4a4a" stroke-width="2.60"/><line x1="206.60" y1="67.42" x2="334.97" y2="47.04" stroke="#4d4a4a" stroke-width="2.20"/><line x1="206.99" y1="133.10" x2="333.06" y2="100.71" stroke="#4d4a4a" stroke-width="3.20"/><polygon points="332.00,46.20 336.20,46.40 336.20,102.20 332.00,102.80" fill="#555252" /><polygon points="336.20,46.60 338.00,46.80 338.00,102.00 336.20,102.20" fill="#6f6c6c" /><polygon points="338.00,48.00 340.50,47.80 340.50,102.80 338.00,101.80" fill="#e3e5e5" /><polygon points="338.00,66.60 340.50,67.00 340.50,70.20 338.00,69.80" fill="#8e8e8e" /><polygon points="340.40,47.00 347.70,46.60 347.70,106.00 344.40,106.70 340.40,103.20" fill="#7a7777" /><polygon points="347.70,46.60 352.20,48.60 352.00,104.40 347.70,106.00" fill="#4a4747" /><polygon points="332.00,45.60 347.70,45.90 352.20,47.80 352.20,49.00 347.70,47.40 332.00,47.00" fill="#514e4e" /><polygon points="96.00,90.60 206.00,72.30 207.00,145.20 99.00,174.60" fill="url(#gl)" /><line x1="119.00" y1="86.77" x2="121.58" y2="168.45" stroke="#4d4a4a" stroke-width="3.10"/><line x1="145.00" y1="82.45" x2="147.11" y2="161.50" stroke="#4d4a4a" stroke-width="3.00"/><line x1="169.40" y1="78.39" x2="171.07" y2="154.98" stroke="#4d4a4a" stroke-width="2.90"/><line x1="191.40" y1="74.73" x2="192.67" y2="149.10" stroke="#4d4a4a" stroke-width="2.70"/><line x1="97.06" y1="120.17" x2="206.38" y2="100.37" stroke="#4d4a4a" stroke-width="3.00"/><line x1="96.08" y1="92.95" x2="206.03" y2="74.20" stroke="#4d4a4a" stroke-width="4.60"/><line x1="98.90" y1="171.91" x2="206.97" y2="142.87" stroke="#4d4a4a" stroke-width="5.00"/><polygon points="198.80,67.80 206.60,69.80 206.30,142.80 200.20,136.60" fill="#5c5959" /><polygon points="206.60,69.80 213.40,71.50 214.20,141.90 206.30,142.80" fill="#464343" /><polygon points="198.80,67.80 206.00,66.60 213.40,71.50 206.60,69.80" fill="#4f4c4c" /><polygon points="17.70,45.00 92.90,91.00 96.90,173.90 23.30,101.50" fill="#4c4848" /><polygon points="21.48,50.03 22.97,50.97 24.54,67.57 23.05,66.48" fill="#dcdddd" /><polygon points="23.33,69.37 24.82,70.49 27.86,102.82 26.39,101.41" fill="#d6d7d7" /><polygon points="26.57,53.24 28.27,54.31 29.80,71.44 28.11,70.20" fill="#dcdddd" /><polygon points="28.39,73.18 30.07,74.45 33.06,107.81 31.39,106.21" fill="#d6d7d7" /><polygon points="31.97,56.63 33.86,57.83 35.36,75.52 33.48,74.14" fill="#dcdddd" /><polygon points="33.74,77.21 35.63,78.63 38.55,113.08 36.68,111.29" fill="#d6d7d7" /><polygon points="37.86,60.35 39.96,61.67 41.42,79.97 39.33,78.44" fill="#dcdddd" /><polygon points="39.59,81.62 41.68,83.18 44.52,118.83 42.47,116.85" fill="#d6d7d7" /><polygon points="43.65,64.00 46.05,65.51 47.48,84.42 45.09,82.67" fill="#dcdddd" /><polygon points="45.35,85.95 47.73,87.74 50.50,124.57 48.15,122.31" fill="#d6d7d7" /><polygon points="51.14,68.72 53.84,70.42 55.22,90.11 52.54,88.14" fill="#dcdddd" /><polygon points="52.78,91.55 55.46,93.56 58.15,131.92 55.50,129.37" fill="#d6d7d7" /><polygon points="58.14,73.12 61.23,75.07 62.57,95.51 59.49,93.25" fill="#dcdddd" /><polygon points="59.73,96.78 62.80,99.09 65.40,138.89 62.36,135.97" fill="#d6d7d7" /><polygon points="66.23,78.22 69.72,80.42 71.01,101.71 67.53,99.15" fill="#dcdddd" /><polygon points="67.76,102.83 71.23,105.44 73.73,146.89 70.30,143.59" fill="#d6d7d7" /><polygon points="74.42,83.38 78.52,85.96 79.74,108.12 75.67,105.13" fill="#dcdddd" /><polygon points="75.89,108.95 79.96,112.01 82.35,155.18 78.33,151.32" fill="#d6d7d7" /><polygon points="83.71,89.23 88.31,92.12 89.47,115.27 84.91,111.92" fill="#dcdddd" /><polygon points="85.12,115.90 89.68,119.33 91.96,164.41 87.45,160.07" fill="#d6d7d7" /><polygon points="87.40,87.60 92.90,91.00 101.60,90.20 106.40,171.00 96.90,174.20 91.40,168.60" fill="#474343" /><path d="M46.19999999999999 -60.9 V-50.5 H56.79999999999999" fill="none" stroke="#222" stroke-width="1.2"/><path d="M52.59999999999999 -51.9 l2.8 2.8 M55.39999999999999 -51.9 l-2.8 2.8" stroke="#222" stroke-width="0.75"/><text x="44.79999999999999" y="-63.5" font-size="6.8" fill="#222" font-family="Liberation Sans">z</text><text x="60.39999999999999" y="-49.9" font-size="6.8" fill="#222" font-family="Liberation Sans">y</text><path d="M53.10000000000002 18.99999999999998 V30.399999999999977 H64.10000000000002" fill="none" stroke="#1d3c9e" stroke-width="1.2"/><path d="M59.50000000000002 28.99999999999998 l2.8 2.8 M62.300000000000026 28.99999999999998 l-2.8 2.8" stroke="#1d3c9e" stroke-width="0.75"/><text x="51.700000000000024" y="16.399999999999977" font-size="6.8" fill="#1d3c9e" font-family="Liberation Sans">z</text><text x="67.70000000000002" y="30.99999999999998" font-size="6.8" fill="#1d3c9e" font-family="Liberation Sans">y</text></svg>
<div class="a" style="left:30.00px;top:86.00px;width:85.30px;height:482.00px;background:#ebebeb;border-radius:0px;"></div>
<div class="a" style="left:115.20px;top:86.00px;width:0.60px;height:482.00px;background:#e4e4e4;border-radius:0px;"></div>
<div class="a" style="left:57.00px;top:90.90px;width:34.00px;height:0.80px;background:#c9c9c9;border-radius:0px;"></div>
<div class="a" style="left:31.30px;top:93.00px;width:83.30px;height:14.60px;background:#c7c7ca;border-radius:2.5px;"></div>
<svg class="a" style="left:37.00px;top:94.60px;" width="12" height="12" viewBox="0 0 12 12" fill="none" stroke="#363c42" stroke-width="0.8" stroke-linecap="round" stroke-linejoin="round"><path d="M4 1.2 L4 10 L6.2 8 L7.6 11 L8.8 10.4 L7.4 7.5 L10.2 7.3 Z" fill="#a0a0a4" stroke="#33363a"/></svg>
<div class="a t" style="left:55.20px;top:96.73px;height:7.74px;line-height:7.74px;font-size:6.45px;color:#1c1c1c;font-weight:normal;text-shadow:0 0 0.3px rgba(0,0,0,0.6);">Pfeil</div>
<svg class="a" style="left:37.00px;top:109.80px;" width="12" height="12" viewBox="0 0 12 12" fill="none" stroke="#363c42" stroke-width="0.8" stroke-linecap="round" stroke-linejoin="round"><rect x="0.6" y="2.2" width="11" height="8" stroke-dasharray="1.5 1" stroke-linecap="butt"/></svg>
<div class="a t" style="left:55.20px;top:111.93px;height:7.74px;line-height:7.74px;font-size:6.45px;color:#1c1c1c;font-weight:normal;text-shadow:0 0 0.3px rgba(0,0,0,0.6);">Markierungsrahmen</div>
<svg class="a" style="left:37.00px;top:136.60px;" width="12" height="12" viewBox="0 0 12 12" fill="none" stroke="#363c42" stroke-width="0.8" stroke-linecap="round" stroke-linejoin="round"><path d="M1.6 3.4 Q1.6 2.8 2.2 2.7 L11.6 1.2 V8 L1.6 11 Z"/></svg>
<div class="a t" style="left:55.20px;top:138.73px;height:7.74px;line-height:7.74px;font-size:6.45px;color:#1c1c1c;font-weight:normal;text-shadow:0 0 0.3px rgba(0,0,0,0.6);">Wand</div>
<svg class="a" style="left:37.00px;top:151.80px;" width="12" height="12" viewBox="0 0 12 12" fill="none" stroke="#363c42" stroke-width="0.8" stroke-linecap="round" stroke-linejoin="round"><path d="M3.6 2 L9 0.6 V10 L3.6 11.6 Z M4.8 6.3 L5.6 6.1"/></svg>
<div class="a t" style="left:55.20px;top:153.93px;height:7.74px;line-height:7.74px;font-size:6.45px;color:#1c1c1c;font-weight:normal;text-shadow:0 0 0.3px rgba(0,0,0,0.6);">Tür</div>
<svg class="a" style="left:37.00px;top:167.00px;" width="12" height="12" viewBox="0 0 12 12" fill="none" stroke="#363c42" stroke-width="0.8" stroke-linecap="round" stroke-linejoin="round"><path d="M2.6 2.2 L9.6 1.8 Q10.4 1.8 10.4 2.6 V8.8 Q10.4 9.6 9.6 9.7 L2.6 10.4 Q1.6 10.5 1.6 9.6 V3 Q1.6 2.2 2.6 2.2 Z M6.6 2 V10 M1.6 6.3 L10.4 5.8"/></svg>
<div class="a t" style="left:55.20px;top:169.13px;height:7.74px;line-height:7.74px;font-size:6.45px;color:#1c1c1c;font-weight:normal;text-shadow:0 0 0.3px rgba(0,0,0,0.6);">Fenster</div>
<svg class="a" style="left:37.00px;top:182.20px;" width="12" height="12" viewBox="0 0 12 12" fill="none" stroke="#363c42" stroke-width="0.8" stroke-linecap="round" stroke-linejoin="round"><path d="M-0.8 6 L2.8 2.8 L4.8 3.4 L4 4.4 L6 5 L9.2 2.6 L13.2 5.6 L4.8 9.2 Z M-0.8 6 V6.9 L4.8 10.2 L13.2 6.5 V5.6"/></svg>
<div class="a t" style="left:55.20px;top:184.33px;height:7.74px;line-height:7.74px;font-size:6.45px;color:#1c1c1c;font-weight:normal;text-shadow:0 0 0.3px rgba(0,0,0,0.6);">Decke</div>
<svg class="a" style="left:37.00px;top:197.40px;" width="12" height="12" viewBox="0 0 12 12" fill="none" stroke="#363c42" stroke-width="0.8" stroke-linecap="round" stroke-linejoin="round"><path d="M4 1.4 Q6.2 0.2 8.4 1.4 V10.6 Q6.2 12 4 10.6 Z M4 1.4 Q6.2 2.6 8.4 1.4"/></svg>
<div class="a t" style="left:55.20px;top:199.53px;height:7.74px;line-height:7.74px;font-size:6.45px;color:#1c1c1c;font-weight:normal;text-shadow:0 0 0.3px rgba(0,0,0,0.6);">Stütze</div>
<svg class="a" style="left:37.00px;top:212.60px;" width="12" height="12" viewBox="0 0 12 12" fill="none" stroke="#363c42" stroke-width="0.8" stroke-linecap="round" stroke-linejoin="round"><path d="M0.6 2.8 L12 6 V10 L0.6 4.6 Z M0.6 2.8 L2.2 2.3 L12 5.2 V6"/></svg>
<div class="a t" style="left:55.20px;top:214.73px;height:7.74px;line-height:7.74px;font-size:6.45px;color:#1c1c1c;font-weight:normal;text-shadow:0 0 0.3px rgba(0,0,0,0.6);">Träger</div>
<svg class="a" style="left:37.00px;top:227.80px;" width="12" height="12" viewBox="0 0 12 12" fill="none" stroke="#363c42" stroke-width="0.8" stroke-linecap="round" stroke-linejoin="round"><path d="M-1.4 6.8 L3.4 2 H10.2 L4.8 10 Z M10.2 2 L13.4 7 L8.6 8 M8.2 5 L8.6 8"/></svg>
<div class="a t" style="left:55.20px;top:229.93px;height:7.74px;line-height:7.74px;font-size:6.45px;color:#1c1c1c;font-weight:normal;text-shadow:0 0 0.3px rgba(0,0,0,0.6);">Dach</div>
<svg class="a" style="left:37.00px;top:243.00px;" width="12" height="12" viewBox="0 0 12 12" fill="none" stroke="#363c42" stroke-width="0.8" stroke-linecap="round" stroke-linejoin="round"><path d="M-0.6 4.2 L8.2 6.8 L13.4 1.6 L13 9.4 L4.4 11.6 Z M8.2 6.8 L4.4 11.6 M-0.6 4.2 L13.4 1.6"/></svg>
<div class="a t" style="left:55.20px;top:245.13px;height:7.74px;line-height:7.74px;font-size:6.45px;color:#1c1c1c;font-weight:normal;text-shadow:0 0 0.3px rgba(0,0,0,0.6);">Schale</div>
<svg class="a" style="left:37.00px;top:258.20px;" width="12" height="12" viewBox="0 0 12 12" fill="none" stroke="#363c42" stroke-width="0.8" stroke-linecap="round" stroke-linejoin="round"><path d="M0.6 3.6 L5.6 1.8 L12.6 5.8 L7.8 7.8 Z M1.8 5.2 L7.8 9.4 L12.6 7.4 M1.8 5.2 V6.4 L7.8 10.8 L12.8 8.6 V5.8"/></svg>
<div class="a t" style="left:55.20px;top:260.33px;height:7.74px;line-height:7.74px;font-size:6.45px;color:#1c1c1c;font-weight:normal;text-shadow:0 0 0.3px rgba(0,0,0,0.6);">Dachfenster</div>
<svg class="a" style="left:37.00px;top:273.40px;" width="12" height="12" viewBox="0 0 12 12" fill="none" stroke="#363c42" stroke-width="0.8" stroke-linecap="round" stroke-linejoin="round"><path d="M0.6 1.6 L12 1.2 V9.2 L0.6 11.4 Z M4.6 1.5 V10.6 M8.4 1.3 V9.9 M0.6 4.8 L12 3.9 M0.6 8 L12 6.5"/></svg>
<div class="a t" style="left:55.20px;top:275.53px;height:7.74px;line-height:7.74px;font-size:6.45px;color:#1c1c1c;font-weight:normal;text-shadow:0 0 0.3px rgba(0,0,0,0.6);">Fassade</div>
<svg class="a" style="left:37.00px;top:288.60px;" width="12" height="12" viewBox="0 0 12 12" fill="none" stroke="#363c42" stroke-width="0.8" stroke-linecap="round" stroke-linejoin="round"><path d="M0.4 2.2 L6.4 1.2 L13 8.6 L7.8 10.6 Z M2 4 L7.8 2.8 M2 4 V5 L8.2 4 M3.8 6 L9.8 4.9 M3.8 6 V7 L10.2 6 M5.8 8.2 L11.6 7 M5.8 8.2 V9.2"/></svg>
<div class="a t" style="left:55.20px;top:290.73px;height:7.74px;line-height:7.74px;font-size:6.45px;color:#1c1c1c;font-weight:normal;text-shadow:0 0 0.3px rgba(0,0,0,0.6);">Treppe</div>
<svg class="a" style="left:37.00px;top:303.80px;" width="12" height="12" viewBox="0 0 12 12" fill="none" stroke="#363c42" stroke-width="0.8" stroke-linecap="round" stroke-linejoin="round"><path d="M0.6 6.2 L12.2 2.2 M0.6 8.2 L12.2 4.2 M0.6 6.2 V10.2 M4.4 5 V8.8 M8.2 3.6 V7.6 M12.2 2.2 V7"/></svg>
<div class="a t" style="left:55.20px;top:305.93px;height:7.74px;line-height:7.74px;font-size:6.45px;color:#1c1c1c;font-weight:normal;text-shadow:0 0 0.3px rgba(0,0,0,0.6);">Geländer</div>
<svg class="a" style="left:37.00px;top:319.00px;" width="12" height="12" viewBox="0 0 12 12" fill="none" stroke="#363c42" stroke-width="0.8" stroke-linecap="round" stroke-linejoin="round"><path d="M3 11.4 V2 Q3 0.8 4.8 0.8 Q6.6 0.8 6.6 2 V5.6 H9.6 Q10.6 5.6 10.6 6.6 V11.4 M3 7.6 H10.6 M6.6 7.6 V11 M3 5.8 L6.6 5.6"/></svg>
<div class="a t" style="left:55.20px;top:321.13px;height:7.74px;line-height:7.74px;font-size:6.45px;color:#1c1c1c;font-weight:normal;text-shadow:0 0 0.3px rgba(0,0,0,0.6);">Objekt</div>
<svg class="a" style="left:37.00px;top:334.20px;" width="12" height="12" viewBox="0 0 12 12" fill="none" stroke="#363c42" stroke-width="0.8" stroke-linecap="round" stroke-linejoin="round"><path d="M5 8.2 Q3.2 6.8 3.8 4.8 Q4.6 3 6.4 3 Q8.2 3 9 4.8 Q9.6 6.8 7.8 8.2 Z M5 9.6 H7.8 M5.6 10.9 H7.2 M6.4 0.4 V1.6 M2 1.8 L2.9 2.7 M10.8 1.8 L9.9 2.7 M0.8 5.8 H2 M10.8 5.8 H12 M2 9.6 L2.9 8.9 M10.8 9.6 L9.9 8.9"/></svg>
<div class="a t" style="left:55.20px;top:336.33px;height:7.74px;line-height:7.74px;font-size:6.45px;color:#1c1c1c;font-weight:normal;text-shadow:0 0 0.3px rgba(0,0,0,0.6);">Lichtquelle</div>
<svg class="a" style="left:37.00px;top:349.40px;" width="12" height="12" viewBox="0 0 12 12" fill="none" stroke="#363c42" stroke-width="0.8" stroke-linecap="round" stroke-linejoin="round"><path d="M1.2 2.6 L5.2 2 V10 L1.2 10.8 Z M5.2 2 L11.8 1.4 V8.4 L5.2 10 M5.2 3.6 L6.8 3.4"/></svg>
<div class="a t" style="left:55.20px;top:351.53px;height:7.74px;line-height:7.74px;font-size:6.45px;color:#1c1c1c;font-weight:normal;text-shadow:0 0 0.3px rgba(0,0,0,0.6);">Wandabschluss</div>
<svg class="a" style="left:37.00px;top:364.60px;" width="12" height="12" viewBox="0 0 12 12" fill="none" stroke="#363c42" stroke-width="0.8" stroke-linecap="round" stroke-linejoin="round"><path d="M1.2 5.4 Q2.6 1.6 5.6 0.6 L9 1.6 Q10.4 4.6 10.8 8 L4.8 10.6 L1.2 8.8 Z M5.6 0.6 Q4.4 5.6 4.8 10.6 M4.8 10.6 Q7 7 9 1.6"/></svg>
<div class="a t" style="left:55.20px;top:366.73px;height:7.74px;line-height:7.74px;font-size:6.45px;color:#1c1c1c;font-weight:normal;text-shadow:0 0 0.3px rgba(0,0,0,0.6);">Morph</div>
<svg class="a" style="left:37.00px;top:379.80px;" width="12" height="12" viewBox="0 0 12 12" fill="none" stroke="#363c42" stroke-width="0.8" stroke-linecap="round" stroke-linejoin="round"><path d="M-1.8 3 Q3 2 7.2 2.2 L13.4 8.8 Q10.6 9.4 8.2 10.6 Q3.6 5.6 -1.8 3 Z M1.4 2.6 Q6.6 5.4 10.8 9.6 M4.4 2.3 Q8.8 5.4 12 9 M2.4 5 Q6 3.8 9.4 4.6 M5.6 7.8 Q8.6 6.6 11.6 7"/></svg>
<div class="a t" style="left:55.20px;top:381.93px;height:7.74px;line-height:7.74px;font-size:6.45px;color:#1c1c1c;font-weight:normal;text-shadow:0 0 0.3px rgba(0,0,0,0.6);">Freifläche</div>
<svg class="a" style="left:37.00px;top:395.00px;" width="12" height="12" viewBox="0 0 12 12" fill="none" stroke="#363c42" stroke-width="0.8" stroke-linecap="round" stroke-linejoin="round"><path d="M1.2 2.4 L10.6 1.6 V9 L1.2 10.6 Z M3.4 4.2 L8.2 3.6 V8.6 L3.4 9.4 Z M8.2 3.6 L10.6 3.2 M8.2 8.6 L10.6 8.2"/></svg>
<div class="a t" style="left:55.20px;top:397.13px;height:7.74px;line-height:7.74px;font-size:6.45px;color:#1c1c1c;font-weight:normal;text-shadow:0 0 0.3px rgba(0,0,0,0.6);">Öffnung</div>
<svg class="a" style="left:37.00px;top:410.20px;" width="12" height="12" viewBox="0 0 12 12" fill="none" stroke="#363c42" stroke-width="0.8" stroke-linecap="round" stroke-linejoin="round"><path d="M0.6 2 H4.6 V3.6 H8.2 V2 H11.8 V7 Q10.6 7.6 11.8 8.4 V11 H0.6 V8.4 Q1.8 7.6 0.6 7 Z M3.6 6.4 H9 M4.6 6.4 V5 M4.6 8.2 H8.2" stroke-width="1"/></svg>
<div class="a t" style="left:55.20px;top:412.33px;height:7.74px;line-height:7.74px;font-size:6.45px;color:#1c1c1c;font-weight:normal;text-shadow:0 0 0.3px rgba(0,0,0,0.6);">Raum</div>
<svg class="a" style="left:37.00px;top:437.40px;" width="12" height="12" viewBox="0 0 12 12" fill="none" stroke="#808488" stroke-width="0.8" stroke-linecap="round" stroke-linejoin="round"><path d="M-0.6 4.2 H7.2 V8.4 H13 M0.8 4.2 L1.6 2.8 L2.4 4.2 M10.4 8.4 L11.2 7 L12 8.4" stroke-width="0.7"/></svg>
<div class="a t" style="left:55.20px;top:439.53px;height:7.74px;line-height:7.74px;font-size:6.45px;color:#828282;font-weight:normal;text-shadow:0 0 0.25px rgba(120,120,120,0.6);">Schnitt</div>
<svg class="a" style="left:37.00px;top:452.60px;" width="12" height="12" viewBox="0 0 12 12" fill="none" stroke="#808488" stroke-width="0.8" stroke-linecap="round" stroke-linejoin="round"><path d="M-0.6 8 H13 M5.2 6.2 L6.4 4 L7.6 6.2 Z" stroke-width="0.7"/></svg>
<div class="a t" style="left:55.20px;top:454.73px;height:7.74px;line-height:7.74px;font-size:6.45px;color:#828282;font-weight:normal;text-shadow:0 0 0.25px rgba(120,120,120,0.6);">Ansicht</div>
<svg class="a" style="left:37.00px;top:467.80px;" width="12" height="12" viewBox="0 0 12 12" fill="none" stroke="#808488" stroke-width="0.8" stroke-linecap="round" stroke-linejoin="round"><rect x="4.8" y="4.2" width="3.2" height="3.2" stroke-width="0.7"/><path d="M6.4 1.2 V2.8 M6.4 8.8 V10.4 M1.8 5.8 H3.4 M9.4 5.8 H11" stroke-width="0.8" stroke-dasharray="0.7 0.7"/></svg>
<div class="a t" style="left:55.20px;top:469.93px;height:7.74px;line-height:7.74px;font-size:6.45px;color:#828282;font-weight:normal;text-shadow:0 0 0.25px rgba(120,120,120,0.6);">Innenansicht</div>
<svg class="a" style="left:37.00px;top:483.00px;" width="12" height="12" viewBox="0 0 12 12" fill="none" stroke="#808488" stroke-width="0.8" stroke-linecap="round" stroke-linejoin="round"><circle cx="6.4" cy="5.8" r="4.8" stroke-width="0.7"/><path d="M4.6 1.4 V10.2 M4.6 4.4 H11 M4.6 7.2 H11" stroke-width="0.7"/></svg>
<div class="a t" style="left:55.20px;top:485.13px;height:7.74px;line-height:7.74px;font-size:6.45px;color:#828282;font-weight:normal;text-shadow:0 0 0.25px rgba(120,120,120,0.6);">Detail</div>
<svg class="a" style="left:37.00px;top:498.20px;" width="12" height="12" viewBox="0 0 12 12" fill="none" stroke="#808488" stroke-width="0.8" stroke-linecap="round" stroke-linejoin="round"><path d="M0.4 1.4 H10.6 L13 3.8 V9.4 Q13 10.4 12 10.4 H0.4 Q-0.6 10.4 -0.6 9.4 V2.4 Q-0.6 1.4 0.4 1.4 Z" stroke-width="0.7"/><path d="M2.4 8.4 L2.8 7 L7 3.6 L8.2 4.8 L4 8 Z M7.4 8.4 H10.6" stroke-width="0.7"/></svg>
<div class="a t" style="left:55.20px;top:500.33px;height:7.74px;line-height:7.74px;font-size:6.45px;color:#828282;font-weight:normal;text-shadow:0 0 0.25px rgba(120,120,120,0.6);">Arbeitsblatt</div>
<svg class="a" style="left:37.00px;top:513.40px;" width="12" height="12" viewBox="0 0 12 12" fill="none" stroke="#808488" stroke-width="0.8" stroke-linecap="round" stroke-linejoin="round"><path d="M2.4 1.6 H9 V5.6 H2.4 Z M9 3 L11.2 2 V5.2 L9 4.4 M5.8 5.6 V10.4 M5.8 6.8 L2 10.2 M5.8 6.8 L10 10.2" stroke-width="0.7"/></svg>
<div class="a t" style="left:55.20px;top:515.53px;height:7.74px;line-height:7.74px;font-size:6.45px;color:#828282;font-weight:normal;text-shadow:0 0 0.25px rgba(120,120,120,0.6);">Kamera</div>
<div class="a" style="left:31.30px;top:124.30px;width:83.50px;height:9.80px;background:#d7d7d7;border-radius:1px;"></div>
<div class="a t" style="left:42.20px;top:125.64px;height:7.92px;line-height:7.92px;font-size:6.6px;color:#262626;font-weight:normal;text-shadow:0 0 0.2px rgba(0,0,0,0.45);">Planung</div>
<svg class="a" style="left:33.6px;top:127.40px" width="5" height="4.4" viewBox="0 0 5 4.4"><path d="M0 0 H5 L2.5 4.2 Z" fill="#8e8e8e"/></svg>
<div class="a" style="left:31.30px;top:425.10px;width:83.50px;height:9.80px;background:#d7d7d7;border-radius:1px;"></div>
<div class="a t" style="left:42.20px;top:426.44px;height:7.92px;line-height:7.92px;font-size:6.6px;color:#262626;font-weight:normal;text-shadow:0 0 0.2px rgba(0,0,0,0.45);">Sichten</div>
<svg class="a" style="left:33.6px;top:428.20px" width="5" height="4.4" viewBox="0 0 5 4.4"><path d="M0 0 H5 L2.5 4.2 Z" fill="#8e8e8e"/></svg>
<div class="a" style="left:31.30px;top:528.20px;width:83.50px;height:9.80px;background:#d7d7d7;border-radius:1px;"></div>
<div class="a t" style="left:42.20px;top:529.54px;height:7.92px;line-height:7.92px;font-size:6.6px;color:#262626;font-weight:normal;text-shadow:0 0 0.2px rgba(0,0,0,0.45);">Dokumentation</div>
<svg class="a" style="left:34.2px;top:530.90px" width="4.4" height="5.2" viewBox="0 0 4.4 5.2"><path d="M0 0 V5.2 L4.2 2.6 Z" fill="#8e8e8e"/></svg>
<div class="a" style="left:867.50px;top:89.00px;width:100.50px;height:492.00px;background:#ececec;border-radius:0px;"></div>
<div class="a" style="left:867.20px;top:89.00px;width:0.70px;height:479.00px;background:#e4e4e4;border-radius:0px;"></div>
<div class="a" style="left:898.60px;top:91.00px;width:38.10px;height:0.80px;background:#c9c9c9;border-radius:0px;"></div>
<svg class="a" style="left:871.00px;top:96.40px;" width="12" height="12" viewBox="0 0 12 12" fill="none" stroke="#444" stroke-width="0.9" stroke-linecap="round" stroke-linejoin="round"><path d="M0.8 9.4 V6.6 L4 3.2 L7 6.2 V9.4 Z M4 3.2 L7.6 3 L11 6.4 V9.4 H7" stroke-width="0.9"/></svg>
<div class="a" style="left:887.40px;top:97.00px;width:0.80px;height:11.00px;background:#d2d2d2;border-radius:0px;"></div>
<div class="a" style="left:892.20px;top:94.00px;width:14.90px;height:16.00px;background:#bababd;border-radius:2.5px;"></div>
<svg class="a" style="left:893.60px;top:96.20px;" width="12" height="12" viewBox="0 0 12 12" fill="none" stroke="#444" stroke-width="0.9" stroke-linecap="round" stroke-linejoin="round"><rect x="1.4" y="2.4" width="9.2" height="7.6" rx="0.8" stroke-width="1"/><path d="M2.6 8.8 V6.6 L4.8 4.4 L7 6.4 V8.8 M4.8 4.4 L7 4 L9.4 6.4 V8.8 H7" stroke-width="0.8"/></svg>
<svg class="a" style="left:910.10px;top:96.20px;" width="12" height="12" viewBox="0 0 12 12" fill="none" stroke="#444" stroke-width="0.9" stroke-linecap="round" stroke-linejoin="round"><path d="M1.4 10 V4 L3.6 1.8 H5.6 V4 H10.6 V10 Z" stroke-width="0.9"/><path d="M5.4 10 V6.8 H8.4 V10" stroke-width="0.8"/></svg>
<svg class="a" style="left:926.60px;top:96.20px;" width="12" height="12" viewBox="0 0 12 12" fill="none" stroke="#444" stroke-width="0.9" stroke-linecap="round" stroke-linejoin="round"><rect x="1.8" y="1.6" width="6.6" height="7.6" rx="1" stroke-width="0.9"/><path d="M4 10.6 H9.6 Q10.4 10.6 10.4 9.8 V3.6" stroke-width="1.3"/></svg>
<div class="a" style="left:948.30px;top:95.80px;width:17.90px;height:12.00px;background:#fff;border-radius:2.8px;"></div>
<svg class="a" style="left:951.40px;top:99.00px;" width="7" height="6" viewBox="0 0 7 6"><path d="M0.5 0.8 H6.5 M0.5 3 H6.5 M0.5 5.2 H6.5" stroke="#666" stroke-width="0.9"/></svg>
<svg class="a" style="left:959.40px;top:98.90px" width="6" height="6" viewBox="0 0 6 6" fill="none" stroke="#222" stroke-width="1.2" stroke-linecap="round" stroke-linejoin="round"><path d="M2.186 1.52 L3.814 3 L2.186 4.48"/></svg>
<div class="a" style="left:869.80px;top:113.90px;width:96.20px;height:9.90px;background:#fff;border-radius:1.5px;box-shadow:0 0.4px 0.6px rgba(0,0,0,.12);"></div>
<svg class="a" style="left:872.80px;top:115.40px;" width="8" height="8" viewBox="0 0 8 8"><circle cx="3.2" cy="3.2" r="2.4" fill="none" stroke="#3a3a3a" stroke-width="0.95"/><path d="M5 5 L7.2 7.2" stroke="#3a3a3a" stroke-width="1.2"/></svg>
<div class="a t" style="left:884.30px;top:115.20px;height:7.80px;line-height:7.80px;font-size:6.5px;color:#c4c4c4;font-weight:normal;transform:scaleX(0.9958);transform-origin:left center;">Ausschnitt-Mappe durch</div>
<div class="a" style="left:867.90px;top:124.40px;width:91.30px;height:227.60px;background:#fff;border-radius:0px;"></div>
<div class="a" style="left:959.20px;top:124.40px;width:6.80px;height:227.60px;background:#f6f6f6;border-radius:0px;"></div>
<div class="a" style="left:962.20px;top:225.40px;width:3.40px;height:77.00px;background:#b4b4b4;border-radius:1.7px;"></div>
<div class="a" style="left:867.90px;top:331.20px;width:91.30px;height:12.80px;background:#dddddd;border-radius:0px;"></div>
<div class="a" style="left:867.9px;top:124.2px;width:91.3px;height:228px;overflow:hidden"><div class="a" style="left:-867.9px;top:-124.2px">
<svg class="a" style="left:916.00px;top:124.90px;" width="10" height="9" viewBox="0 0 10 9"><path d="M0.8 7.6 V2.4 H2.2 V1 H7.8 V2.4 H9.2 V7.6 Z M0.8 2.4 H9.2" fill="#f4f8ff" stroke="#4a90f5" stroke-width="0.85"/></svg>
<div class="a t" style="left:927.70px;top:125.66px;height:7.68px;line-height:7.68px;font-size:6.4px;color:#2b2b2b;font-weight:normal;text-shadow:0 0 0.2px rgba(0,0,0,0.45);">D-D Schnitt</div>
<svg class="a" style="left:916.00px;top:137.80px;" width="10" height="9" viewBox="0 0 10 9"><path d="M0.8 7.6 V3 L5 0.8 L9.2 3 V7.6 Z M0.8 3.2 H9.2" fill="#f4f8ff" stroke="#4a90f5" stroke-width="0.85"/></svg>
<div class="a t" style="left:927.70px;top:138.56px;height:7.68px;line-height:7.68px;font-size:6.4px;color:#2b2b2b;font-weight:normal;text-shadow:0 0 0.2px rgba(0,0,0,0.45);">E-E Schnitt</div>
<svg class="a" style="left:916.00px;top:150.60px;" width="10" height="9" viewBox="0 0 10 9"><path d="M0.8 7.6 V3 L5 0.8 L9.2 3 V7.6 Z M0.8 3.2 H9.2" fill="#f4f8ff" stroke="#4a90f5" stroke-width="0.85"/></svg>
<div class="a t" style="left:927.70px;top:151.36px;height:7.68px;line-height:7.68px;font-size:6.4px;color:#2b2b2b;font-weight:normal;text-shadow:0 0 0.2px rgba(0,0,0,0.45);">F-F Schnitt</div>
<svg class="a" style="left:899.50px;top:165.20px" width="6" height="6" viewBox="0 0 6 6" fill="none" stroke="#6a6a6a" stroke-width="1.05" stroke-linecap="round" stroke-linejoin="round"><path d="M1.3 2.065 L3 3.935 L4.7 2.065"/></svg>
<svg class="a" style="left:908.80px;top:163.80px;" width="10" height="9" viewBox="0 0 10 9"><path d="M1.6 7.6 V3.2 L3.8 1 H7 L9.4 3.2 V7.6 Z" fill="#e8f0ff" stroke="#4a90f5" stroke-width="0.85"/><path d="M3 3 H8" stroke="#4a90f5" stroke-width="0.8"/><path d="M0.2 8.6 V6.4 H2.2 M0.3 6.5 L2 8.2" stroke="#111" stroke-width="0.9" fill="none"/></svg>
<div class="a t" style="left:920.40px;top:164.56px;height:7.68px;line-height:7.68px;font-size:6.4px;color:#2b2b2b;font-weight:normal;text-shadow:0 0 0.2px rgba(0,0,0,0.45);">Ansichten</div>
<svg class="a" style="left:916.00px;top:177.10px;" width="10" height="9" viewBox="0 0 10 9"><path d="M0.8 7.6 V3.2 L3.4 1 H6.6 L9.2 3.2 V7.6 Z" fill="#f4f8ff" stroke="#4a90f5" stroke-width="0.85"/></svg>
<div class="a t" style="left:927.70px;top:177.86px;height:7.68px;line-height:7.68px;font-size:6.4px;color:#2b2b2b;font-weight:normal;text-shadow:0 0 0.2px rgba(0,0,0,0.45);">Nordansicht</div>
<svg class="a" style="left:916.00px;top:190.00px;" width="10" height="9" viewBox="0 0 10 9"><path d="M0.8 7.6 V3.2 L3.4 1 H6.6 L9.2 3.2 V7.6 Z" fill="#f4f8ff" stroke="#4a90f5" stroke-width="0.85"/></svg>
<div class="a t" style="left:927.70px;top:190.76px;height:7.68px;line-height:7.68px;font-size:6.4px;color:#2b2b2b;font-weight:normal;text-shadow:0 0 0.2px rgba(0,0,0,0.45);">Ostansicht</div>
<svg class="a" style="left:916.00px;top:202.90px;" width="10" height="9" viewBox="0 0 10 9"><path d="M0.8 7.6 V3.2 L3.4 1 H6.6 L9.2 3.2 V7.6 Z" fill="#f4f8ff" stroke="#4a90f5" stroke-width="0.85"/></svg>
<div class="a t" style="left:927.70px;top:203.66px;height:7.68px;line-height:7.68px;font-size:6.4px;color:#2b2b2b;font-weight:normal;text-shadow:0 0 0.2px rgba(0,0,0,0.45);">Südansicht</div>
<svg class="a" style="left:916.00px;top:215.80px;" width="10" height="9" viewBox="0 0 10 9"><path d="M0.8 7.6 V3.2 L3.4 1 H6.6 L9.2 3.2 V7.6 Z" fill="#f4f8ff" stroke="#4a90f5" stroke-width="0.85"/></svg>
<div class="a t" style="left:927.70px;top:216.56px;height:7.68px;line-height:7.68px;font-size:6.4px;color:#2b2b2b;font-weight:normal;text-shadow:0 0 0.2px rgba(0,0,0,0.45);">Westansicht</div>
<svg class="a" style="left:899.50px;top:230.50px" width="6" height="6" viewBox="0 0 6 6" fill="none" stroke="#6a6a6a" stroke-width="1.05" stroke-linecap="round" stroke-linejoin="round"><path d="M1.3 2.065 L3 3.935 L4.7 2.065"/></svg>
<svg class="a" style="left:908.80px;top:229.10px;" width="10" height="9" viewBox="0 0 10 9"><rect x="1.6" y="0.8" width="8" height="6.8" rx="0.8" fill="#e8f0ff" stroke="#4a90f5" stroke-width="0.85"/><path d="M3.4 2.4 H5 V4.4 H3.4 Z M6.4 2.4 H8 V4.4 H6.4 Z" fill="none" stroke="#4a90f5" stroke-width="0.7"/><path d="M0.2 8.6 V6.4 H2.2 M0.3 6.5 L2 8.2" stroke="#111" stroke-width="0.9" fill="none"/></svg>
<div class="a t" style="left:920.40px;top:229.86px;height:7.68px;line-height:7.68px;font-size:6.4px;color:#2b2b2b;font-weight:normal;text-shadow:0 0 0.2px rgba(0,0,0,0.45);">Innenansichten</div>
<svg class="a" style="left:907.50px;top:243.40px" width="6" height="6" viewBox="0 0 6 6" fill="none" stroke="#6a6a6a" stroke-width="1.05" stroke-linecap="round" stroke-linejoin="round"><path d="M2.065 1.3 L3.935 3 L2.065 4.7"/></svg>
<svg class="a" style="left:916.00px;top:242.00px;" width="10" height="9" viewBox="0 0 10 9"><rect x="3.4" y="2.6" width="3.2" height="3.6" fill="none" stroke="#4a90f5" stroke-width="0.8"/><path d="M5 0.4 V1.6 M5 7.2 V8.4 M1 4.4 H2.2 M7.8 4.4 H9" stroke="#4a90f5" stroke-width="0.8" stroke-dasharray="0.8 0.6"/></svg>
<div class="a t" style="left:927.70px;top:242.76px;height:7.68px;line-height:7.68px;font-size:6.4px;color:#2b2b2b;font-weight:normal;text-shadow:0 0 0.2px rgba(0,0,0,0.45);">IA-01 WC B</div>
<svg class="a" style="left:892.50px;top:256.30px" width="6" height="6" viewBox="0 0 6 6" fill="none" stroke="#6a6a6a" stroke-width="1.05" stroke-linecap="round" stroke-linejoin="round"><path d="M2.065 1.3 L3.935 3 L2.065 4.7"/></svg>
<svg class="a" style="left:901.20px;top:255.30px;" width="10" height="8" viewBox="0 0 10 8"><path d="M0.6 7.4 V1.4 Q0.6 0.6 1.4 0.6 H3.4 L4.2 1.8 H8.6 Q9.4 1.8 9.4 2.6 V7.4 Z M0.6 3 H9.4" fill="#f4f4f4" stroke="#555" stroke-width="0.8"/></svg>
<div class="a t" style="left:912.80px;top:255.66px;height:7.68px;line-height:7.68px;font-size:6.4px;color:#2b2b2b;font-weight:normal;text-shadow:0 0 0.2px rgba(0,0,0,0.45);">Detailplanung</div>
<svg class="a" style="left:884.80px;top:269.50px" width="6" height="6" viewBox="0 0 6 6" fill="none" stroke="#6a6a6a" stroke-width="1.05" stroke-linecap="round" stroke-linejoin="round"><path d="M2.065 1.3 L3.935 3 L2.065 4.7"/></svg>
<svg class="a" style="left:892.60px;top:268.50px;" width="10" height="8" viewBox="0 0 10 8"><path d="M0.6 7.4 V1.4 Q0.6 0.6 1.4 0.6 H3.4 L4.2 1.8 H8.6 Q9.4 1.8 9.4 2.6 V7.4 Z M0.6 3 H9.4" fill="#f4f4f4" stroke="#555" stroke-width="0.8"/></svg>
<div class="a t" style="left:905.30px;top:268.86px;height:7.68px;line-height:7.68px;font-size:6.4px;color:#2b2b2b;font-weight:normal;text-shadow:0 0 0.2px rgba(0,0,0,0.45);">Listen und Berechn</div>
<svg class="a" style="left:884.30px;top:282.70px" width="6" height="6" viewBox="0 0 6 6" fill="none" stroke="#6a6a6a" stroke-width="1.05" stroke-linecap="round" stroke-linejoin="round"><path d="M1.3 2.065 L3 3.935 L4.7 2.065"/></svg>
<svg class="a" style="left:892.60px;top:281.70px;" width="10" height="8" viewBox="0 0 10 8"><path d="M0.6 7.4 V1.4 Q0.6 0.6 1.4 0.6 H3.4 L4.2 1.8 H8.6 Q9.4 1.8 9.4 2.6 V7.4 Z M0.6 3 H9.4" fill="#f4f4f4" stroke="#555" stroke-width="0.8"/></svg>
<div class="a t" style="left:905.30px;top:282.06px;height:7.68px;line-height:7.68px;font-size:6.4px;color:#2b2b2b;font-weight:normal;text-shadow:0 0 0.2px rgba(0,0,0,0.45);">3D-Modell</div>
<svg class="a" style="left:892.50px;top:295.80px" width="6" height="6" viewBox="0 0 6 6" fill="none" stroke="#6a6a6a" stroke-width="1.05" stroke-linecap="round" stroke-linejoin="round"><path d="M2.065 1.3 L3.935 3 L2.065 4.7"/></svg>
<svg class="a" style="left:901.20px;top:294.40px;" width="10" height="9" viewBox="0 0 10 9"><path d="M1 3 H6.4 V7 H1 Z M6.4 4.2 L9.2 3 V7 L6.4 5.8 M1.4 1.4 Q4 0 7 1.4" fill="none" stroke="#4a90f5" stroke-width="0.85"/></svg>
<div class="a t" style="left:914.60px;top:295.16px;height:7.68px;line-height:7.68px;font-size:6.4px;color:#2b2b2b;font-weight:normal;text-shadow:0 0 0.2px rgba(0,0,0,0.45);">Animationsroute</div>
<svg class="a" style="left:901.20px;top:307.10px;" width="10" height="9" viewBox="0 0 10 9"><path d="M0.8 1.6 L6 0.8 V8.2 L0.8 7.4 Z M6 0.8 Q9 1.8 9 4.4 Q9 7.2 6 8.2" fill="#f4f8ff" stroke="#4a90f5" stroke-width="0.85"/></svg>
<div class="a t" style="left:912.80px;top:307.86px;height:7.68px;line-height:7.68px;font-size:6.4px;color:#2b2b2b;font-weight:normal;text-shadow:0 0 0.2px rgba(0,0,0,0.45);">Gesamtmodell</div>
<svg class="a" style="left:901.20px;top:320.00px;" width="10" height="9" viewBox="0 0 10 9"><path d="M0.8 1.6 L6 0.8 V8.2 L0.8 7.4 Z M6 0.8 Q9 1.8 9 4.4 Q9 7.2 6 8.2" fill="#f4f8ff" stroke="#4a90f5" stroke-width="0.85"/></svg>
<div class="a t" style="left:912.80px;top:320.76px;height:7.68px;line-height:7.68px;font-size:6.4px;color:#2b2b2b;font-weight:normal;text-shadow:0 0 0.2px rgba(0,0,0,0.45);">Gebäudemodell</div>
<svg class="a" style="left:901.20px;top:333.10px;" width="10" height="9" viewBox="0 0 10 9"><path d="M0.8 1.6 L6 0.8 V8.2 L0.8 7.4 Z M6 0.8 Q9 1.8 9 4.4 Q9 7.2 6 8.2" fill="#f4f8ff" stroke="#4a90f5" stroke-width="0.85"/></svg>
<div class="a t" style="left:912.80px;top:333.86px;height:7.68px;line-height:7.68px;font-size:6.4px;color:#2b2b2b;font-weight:bold;">Allgemeine Pers</div>
</div></div>
<div class="a" style="left:869.80px;top:346.80px;width:48.90px;height:3.60px;background:#c2c2c2;border-radius:1.8px;"></div>
<svg class="a" style="left:870.70px;top:355.50px;" width="12" height="12" viewBox="0 0 12 12" fill="none" stroke="#444" stroke-width="0.85" stroke-linecap="round" stroke-linejoin="round"><rect x="1" y="4.4" width="8" height="6" rx="1"/><circle cx="5" cy="7.4" r="1.7"/><path d="M3.4 4.4 L4 3.4 H6 L6.6 4.4"/><circle cx="9.4" cy="2.8" r="2.9" fill="#fdfeff" stroke="#5b9bf6" stroke-width="0.7"/><path d="M7.9 2.8 H10.9 M9.4 1.2999999999999998 V4.3" stroke="#5b9bf6" stroke-width="0.7" stroke-linecap="butt"/></svg>
<svg class="a" style="left:887.50px;top:355.50px;" width="12" height="12" viewBox="0 0 12 12" fill="none" stroke="#444" stroke-width="0.85" stroke-linecap="round" stroke-linejoin="round"><path d="M1.4 10.4 V6 L3.2 4.2 H4.8 V5.6 H9 V10.4 Z" /><path d="M0.4 11.4 V9.4 H2.4 M0.5 9.5 L2.2 11.2" stroke="#111"/><circle cx="9.4" cy="2.8" r="2.9" fill="#fdfeff" stroke="#5b9bf6" stroke-width="0.7"/><path d="M7.9 2.8 H10.9 M9.4 1.2999999999999998 V4.3" stroke="#5b9bf6" stroke-width="0.7" stroke-linecap="butt"/></svg>
<svg class="a" style="left:903.70px;top:355.50px;" width="12" height="12" viewBox="0 0 12 12" fill="none" stroke="#444" stroke-width="0.85" stroke-linecap="round" stroke-linejoin="round"><path d="M1.2 10 V4.4 Q1.2 3.6 2 3.6 H3.8 L4.6 4.8 H8.8 Q9.6 4.8 9.6 5.6 V10 Z"/><circle cx="9.4" cy="2.8" r="2.9" fill="#fdfeff" stroke="#5b9bf6" stroke-width="0.7"/><path d="M7.9 2.8 H10.9 M9.4 1.2999999999999998 V4.3" stroke="#5b9bf6" stroke-width="0.7" stroke-linecap="butt"/></svg>
<svg class="a" style="left:919.90px;top:355.30px;" width="12" height="12" viewBox="0 0 12 12" fill="none" stroke="#3f88f5" stroke-width="1.0" stroke-linecap="round" stroke-linejoin="round"><rect x="2.2" y="3" width="7.6" height="6" rx="0.9" fill="#f1f6ff"/><path d="M2.2 4.4 H9.8" stroke-width="0.7"/><path d="M4 5.8 H8 V7.6 H4 Z M6 5.8 V7.6" stroke-width="0.6"/></svg>
<svg class="a" style="left:936.00px;top:355.40px;" width="12" height="12" viewBox="0 0 12 12" fill="none" stroke="#f5432b" stroke-width="1.25" stroke-linecap="round" stroke-linejoin="round"><path d="M2.5 2.4 L9.5 9.8 M9.5 2.4 L2.5 9.8"/></svg>
<div class="a" style="left:869.00px;top:371.30px;width:97.20px;height:11.30px;background:#d4d4d4;border-radius:1.5px;"></div>
<svg class="a" style="left:872px;top:374.9px" width="5" height="4.4" viewBox="0 0 5 4.4"><path d="M0 0 H5 L2.5 4.2 Z" fill="#8a8a8a"/></svg>
<div class="a t" style="left:880.60px;top:373.10px;height:7.80px;line-height:7.80px;font-size:6.5px;color:#333;font-weight:normal;text-shadow:0 0 0.2px rgba(0,0,0,0.45);">Beschreibungen</div>
<svg class="a" style="left:869.60px;top:385.00px;" width="8" height="8" viewBox="0 0 8 8"><path d="M0.8 1.6 L4.6 1 V7 L0.8 6.4 Z M4.6 1 Q7 1.8 7 4 Q7 6.2 4.6 7" fill="#f4f8ff" stroke="#4a90f5" stroke-width="0.85"/></svg>
<div class="a" style="left:880.00px;top:384.80px;width:16.80px;height:8.60px;background:#fff;border-radius:1px;"></div>
<div class="a" style="left:899.10px;top:384.80px;width:66.90px;height:8.60px;background:#fff;border-radius:1px;"></div>
<div class="a" style="left:899.1px;top:382.8px;width:66.9px;height:12.6px;overflow:hidden"><div class="a t" style="left:2.10px;top:2.74px;height:7.92px;line-height:7.92px;font-size:6.6px;color:#2e2e2e;font-weight:normal;transform:scaleX(0.9888);transform-origin:left center;">Allgemeine Perspektive</div></div>
<svg class="a" style="left:869.40px;top:396.00px;" width="9" height="8" viewBox="0 0 9 8"><path d="M0.6 3.2 L2.8 1 H8.4 L6.2 3.2 Z M0.6 3.2 V7 H6.2 V3.2 M6.2 7 L8.4 4.8 V1 M0.6 5.1 H6.2" fill="none" stroke="#444" stroke-width="0.7"/></svg>
<div class="a t" style="left:880.00px;top:396.02px;height:7.56px;line-height:7.56px;font-size:6.3px;color:#2b2b2b;font-weight:normal;text-shadow:0 0 0.2px rgba(0,0,0,0.45);">70 - 3D Gesamtmodell</div>
<svg class="a" style="left:869.40px;top:409.40px;" width="9" height="4.4" viewBox="0 0 9 4.4"><rect x="0.5" y="0.5" width="8" height="3.2" rx="0.6" fill="none" stroke="#333" stroke-width="0.85"/><path d="M2.5 2.4 V3.6 M4.5 2.4 V3.6 M6.5 2.4 V3.6" stroke="#333" stroke-width="0.6"/></svg>
<div class="a t" style="left:880.00px;top:407.72px;height:7.56px;line-height:7.56px;font-size:6.3px;color:#2b2b2b;font-weight:normal;text-shadow:0 0 0.2px rgba(0,0,0,0.45);">1:100</div>
<svg class="a" style="left:869.40px;top:418.80px;" width="9" height="8" viewBox="0 0 9 8"><rect x="0.5" y="1.6" width="8" height="5.8" rx="1.2" fill="none" stroke="#333" stroke-width="0.85"/><circle cx="4.5" cy="4.5" r="2" fill="none" stroke="#333" stroke-width="0.8"/><path d="M3 1.6 L3.6 0.6 H5.4 L6 1.6" fill="none" stroke="#333" stroke-width="0.7"/></svg>
<div class="a t" style="left:880.00px;top:419.02px;height:7.56px;line-height:7.56px;font-size:6.3px;color:#2b2b2b;font-weight:normal;text-shadow:0 0 0.2px rgba(0,0,0,0.45);">3D-Fenster</div>
<div class="a" style="left:869.80px;top:430.80px;width:96.00px;height:9.40px;background:#fff;border-radius:2.6px;box-shadow:0 0.3px 0.6px rgba(0,0,0,.18);"></div>
<div class="a t" style="left:917.60px;top:431.62px;height:7.56px;line-height:7.56px;font-size:6.3px;color:#2b2b2b;font-weight:normal;transform:translateX(-50%);">Einstellungen...</div>
<div class="a" style="left:898.60px;top:444.90px;width:38.10px;height:0.80px;background:#c9c9c9;border-radius:0px;"></div>
<div class="a" style="left:869.80px;top:449.20px;width:14.70px;height:14.40px;background:#f3f3f3;border-radius:2.4px;"></div>
<svg class="a" style="left:871.20px;top:450.40px;" width="12" height="12" viewBox="0 0 12 12" fill="none" stroke="#3a3a3a" stroke-width="0.9" stroke-linecap="round" stroke-linejoin="round"><rect x="2" y="1.8" width="6.4" height="7" rx="0.9" stroke="#a6a6a6" fill="#f0f0f0"/><path d="M4 10.4 H9.6 Q10.4 10.4 10.4 9.6 V3.6" stroke="#b4cdf7"/></svg>
<div class="a" style="left:885.80px;top:449.20px;width:80.40px;height:14.40px;background:#f3f3f3;border-radius:2.4px;"></div>
<svg class="a" style="left:887.60px;top:452.40px;" width="10" height="8" viewBox="0 0 10 8"><path d="M0.6 7.4 V1.4 Q0.6 0.6 1.4 0.6 H3 L4 2.6 H8.6 Q9.4 2.6 9.4 3.4 V7.4 Z" fill="#fafcff" stroke="#9cc3f8" stroke-width="0.9"/></svg>
<div class="a t" style="left:899.00px;top:452.82px;height:7.56px;line-height:7.56px;font-size:6.3px;color:#c3c3c3;font-weight:normal;">2. Obergeschoss (\A...</div>
<svg class="a" style="left:959.60px;top:453.40px" width="6" height="6" viewBox="0 0 6 6" fill="none" stroke="#777" stroke-width="0.9" stroke-linecap="round" stroke-linejoin="round"><path d="M2.12 1.4 L3.88 3 L2.12 4.6"/></svg>
<svg class="a" style="left:871.30px;top:467.90px;" width="12" height="12" viewBox="0 0 12 12" fill="none" stroke="#3a3a3a" stroke-width="0.8" stroke-linecap="round" stroke-linejoin="round"><rect x="1.4" y="1.4" width="6" height="6" rx="0.8" stroke="#666"/><rect x="5" y="5" width="5.8" height="5.8" rx="0.8" stroke="#8fb8f6"/><path d="M3.4 3.4 L8.4 8.4 M3.4 5 V3.4 H5 M8.4 6.8 V8.4 H6.8" stroke="#666" stroke-width="0.65"/></svg>
<svg class="a" style="left:903.90px;top:467.90px;" width="12" height="12" viewBox="0 0 12 12" fill="none" stroke="#3a3a3a" stroke-width="0.8" stroke-linecap="round" stroke-linejoin="round"><rect x="1.6" y="1.6" width="6.6" height="6.4" rx="0.8" stroke="#8fb8f6"/><path d="M8.2 6.2 V11 M5.8 8.6 H10.6 M7.4 7 L8.2 6.2 L9 7 M7.4 10.2 L8.2 11 L9 10.2 M6.6 7.8 L5.8 8.6 L6.6 9.4 M9.8 7.8 L10.6 8.6 L9.8 9.4" stroke="#666" stroke-width="0.6"/></svg>
<svg class="a" style="left:919.90px;top:467.90px;" width="12" height="12" viewBox="0 0 12 12" fill="none" stroke="#3a3a3a" stroke-width="0.8" stroke-linecap="round" stroke-linejoin="round"><path d="M2 4.4 L5.2 2.2 L9.4 3.4 L10 7 L7 9.4 L2.8 8.4 Z" stroke="#8fb8f6"/><path d="M7.6 10.6 Q9.6 10.6 10.4 8.6 M10.4 8.6 L9.4 9 M10.4 8.6 L10.8 9.6" stroke="#666" stroke-width="0.65"/></svg>
<svg class="a" style="left:936.40px;top:467.90px;" width="12" height="12" viewBox="0 0 12 12" fill="none" stroke="#3a3a3a" stroke-width="0.8" stroke-linecap="round" stroke-linejoin="round"><rect x="1.6" y="2" width="6" height="5.4" rx="0.8" stroke="#8fb8f6"/><rect x="4.4" y="4.6" width="6" height="5.4" rx="0.8" stroke="#8fb8f6"/><path d="M5.6 4.2 L7.6 6 M7.6 4.6 V6 H6.2" stroke="#777" stroke-width="0.6"/></svg>
<svg class="a" style="left:952.40px;top:467.90px;" width="12" height="12" viewBox="0 0 12 12" fill="none" stroke="#666" stroke-width="0.75" stroke-linecap="round" stroke-linejoin="round"><circle cx="6" cy="6" r="4.4"/><path d="M3.8 5.6 Q4.4 3.8 6.2 3.8 M6.2 3.8 L5.4 3.2 M6.2 3.8 L5.4 4.6 M8.2 6.4 Q7.6 8.2 5.8 8.2 M5.8 8.2 L6.6 7.6 M5.8 8.2 L6.6 8.8" stroke-width="0.6"/></svg>
<div class="a" style="left:868.00px;top:485.20px;width:100.00px;height:0.80px;background:#dadada;border-radius:0px;"></div>
<div class="a t" style="left:869.00px;top:488.90px;height:7.80px;line-height:7.80px;font-size:6.5px;color:#777;font-weight:normal;">Transparentpause:</div>
<div class="a" style="left:869.80px;top:499.40px;width:14.70px;height:15.00px;background:#f5f5f5;border-radius:2.4px;"></div>
<div class="a" style="left:871.00px;top:504.00px;width:6.60px;height:6.60px;background:#7b8ef2;border-radius:0.6px;"></div>
<svg class="a" style="left:878.00px;top:504.20px" width="6" height="6" viewBox="0 0 6 6" fill="none" stroke="#555" stroke-width="0.9" stroke-linecap="round" stroke-linejoin="round"><path d="M2.175 1.5 L3.825 3 L2.175 4.5"/></svg>
<div class="a" style="left:887.00px;top:505.70px;width:70.30px;height:0.80px;background:#dedede;border-radius:0px;"></div>
<svg class="a" style="left:887.00px;top:504.30px;" width="67.5" height="3.6" viewBox="0 0 67.5 3.6"><path d="M0.00 0 V3.6 M6.75 0 V3.6 M13.50 0 V3.6 M20.25 0 V3.6 M27.00 0 V3.6 M33.75 0 V3.6 M40.50 0 V3.6 M47.25 0 V3.6 M54.00 0 V3.6 M60.75 0 V3.6 M67.50 0 V3.6" stroke="#cfcfcf" stroke-width="0.7"/></svg>
<div class="a" style="left:917.80px;top:502.20px;width:3.00px;height:8.00px;background:#fbfbfb;border-radius:1.5px;box-shadow:0 0 0.8px rgba(0,0,0,.35);"></div>
<div class="a" style="left:959.20px;top:499.40px;width:7.00px;height:15.00px;background:#f5f5f5;border-radius:2.4px;"></div>
<svg class="a" style="left:959.80px;top:504.00px" width="6" height="6" viewBox="0 0 6 6" fill="none" stroke="#555" stroke-width="0.9" stroke-linecap="round" stroke-linejoin="round"><path d="M2.175 1.5 L3.825 3 L2.175 4.5"/></svg>
<div class="a t" style="left:869.00px;top:517.90px;height:7.80px;line-height:7.80px;font-size:6.5px;color:#777;font-weight:normal;">Aktiv:</div>
<div class="a" style="left:869.60px;top:528.80px;width:14.90px;height:15.00px;background:#f5f5f5;border-radius:2.4px;"></div>
<svg class="a" style="left:870.40px;top:532.90px;" width="7" height="7" viewBox="0 0 7 7"><circle cx="3.5" cy="3.5" r="3.3" fill="#7aa7ea"/><path d="M3.5 3.5 L3.5 0.2 A3.3 3.3 0 0 1 6.6 4.6 Z" fill="#e36a5c"/><path d="M3.5 3.5 L6.6 4.6 A3.3 3.3 0 0 1 1 5.7 Z" fill="#7fc98b"/></svg>
<svg class="a" style="left:878.00px;top:533.40px" width="6" height="6" viewBox="0 0 6 6" fill="none" stroke="#555" stroke-width="0.9" stroke-linecap="round" stroke-linejoin="round"><path d="M2.175 1.5 L3.825 3 L2.175 4.5"/></svg>
<div class="a" style="left:887.00px;top:535.60px;width:65.00px;height:0.80px;background:#dedede;border-radius:0px;"></div>
<svg class="a" style="left:887.60px;top:534.10px;" width="69.0" height="3.6" viewBox="0 0 69.0 3.6"><path d="M0.00 0 V3.6 M6.90 0 V3.6 M13.80 0 V3.6 M20.70 0 V3.6 M27.60 0 V3.6 M34.50 0 V3.6 M41.40 0 V3.6 M48.30 0 V3.6 M55.20 0 V3.6 M62.10 0 V3.6 M69.00 0 V3.6" stroke="#cfcfcf" stroke-width="0.7"/></svg>
<div class="a" style="left:953.20px;top:530.20px;width:3.00px;height:8.20px;background:#fbfbfb;border-radius:1.5px;box-shadow:0 0 0.8px rgba(0,0,0,.35);"></div>
<div class="a" style="left:868.00px;top:546.60px;width:100.00px;height:0.80px;background:#dcdcdc;border-radius:0px;"></div>
<svg class="a" style="left:886.80px;top:552.30px;" width="12" height="12" viewBox="0 0 12 12" fill="none" stroke="#3a3a3a" stroke-width="0.85" stroke-linecap="round" stroke-linejoin="round"><rect x="1.4" y="1.4" width="6.4" height="6" rx="0.9" stroke="#8fb8f6"/><path d="M6.2 10.8 L5.4 8.6 Q5.2 7.8 6 8 L6.4 8.4 V6.4 Q6.4 5.8 7 5.8 Q7.6 5.8 7.6 6.4 V7.4 Q8.2 7 8.6 7.6 Q9.2 7.4 9.6 8 Q10.4 7.8 10.4 8.6 V10 L10 11" stroke="#777" stroke-width="0.65" fill="#ececec"/></svg>
<div class="a" style="left:902.00px;top:550.60px;width:15.00px;height:15.20px;background:#cfcfcf;border-radius:2.4px;"></div>
<svg class="a" style="left:903.50px;top:552.20px;" width="12" height="12" viewBox="0 0 12 12" fill="none" stroke="#3a3a3a" stroke-width="0.9" stroke-linecap="round" stroke-linejoin="round"><rect x="1.8" y="1.8" width="6" height="6" rx="0.8" stroke="#9a9a9a"/><rect x="4.4" y="4.4" width="6" height="6" rx="0.8" stroke="#8fb5ee"/><path d="M6 7.6 L7 8.6 L8.8 6.4" stroke="#9a9a9a" stroke-width="0.7"/></svg>
<svg class="a" style="left:919.90px;top:552.30px;" width="12" height="12" viewBox="0 0 12 12" fill="none" stroke="#3a3a3a" stroke-width="0.8" stroke-linecap="round" stroke-linejoin="round"><path d="M3.6 2.8 H1.8 Q1 2.8 1 3.6 V8.4 Q1 9.2 1.8 9.2 H3.6" stroke="#aaa"/><path d="M8.4 2.8 H10.2 Q11 2.8 11 3.6 V8.4 Q11 9.2 10.2 9.2 H8.4" stroke="#a5c6f7"/><path d="M6 1.6 V10.4" stroke="#999" stroke-width="0.7"/><path d="M4 6 H8 M5 5 L4 6 L5 7 M7 5 L8 6 L7 7" stroke="#999" stroke-width="0.6"/></svg>
<svg class="a" style="left:936.10px;top:552.30px;" width="12" height="12" viewBox="0 0 12 12" fill="none" stroke="#3a3a3a" stroke-width="0.9" stroke-linecap="round" stroke-linejoin="round"><rect x="1.6" y="1.6" width="6.6" height="6" rx="0.6" stroke-dasharray="1 0.8" stroke="#a0a0a0" stroke-linecap="butt"/><path d="M3.4 7.6 V9.4 L5 7.8" stroke="#a0a0a0" stroke-width="0.6"/><ellipse cx="8.6" cy="8.8" rx="2.2" ry="1.4" stroke="#999" stroke-width="0.65" transform="rotate(-25 8.6 8.8)"/></svg>
<svg class="a" style="left:887.40px;top:568.80px;" width="9" height="8" viewBox="0 0 9 8"><rect x="0.5" y="0.5" width="6.4" height="4.6" rx="0.5" fill="none" stroke="#333" stroke-width="0.9"/><rect x="2" y="2.4" width="6.4" height="4.8" rx="0.5" fill="#ececec" stroke="#333" stroke-width="0.9"/></svg>
<div class="a" style="left:901.20px;top:569.00px;width:0.80px;height:8.00px;background:#aaa;border-radius:0px;"></div>
<div class="a t" style="left:907.80px;top:568.74px;height:9.12px;line-height:9.12px;font-size:7.6px;color:#4a4f55;font-weight:normal;transform:scaleX(0.9108);transform-origin:left center;text-shadow:0 0 0.3px rgba(60,65,70,0.8);">GRAPHISOFT</div>
<div class="a t" style="left:954.70px;top:568.74px;height:9.12px;line-height:9.12px;font-size:7.6px;color:#8d9196;font-weight:normal;transform:scaleX(0.8421);transform-origin:left center;">ID</div>
<div class="a" style="left:30.00px;top:568.00px;width:837.50px;height:13.00px;background:#ececec;border-radius:0px;"></div>
<div class="a" style="left:115.80px;top:556.00px;width:751.70px;height:12.40px;background:#ececec;border-radius:0px;"></div>
<div class="a" style="left:474.30px;top:548.80px;width:16.70px;height:7.00px;background:#e5e5e5;border-radius:1.2px;"></div>
<div class="a" style="left:475.30px;top:551.30px;width:2.60px;height:1.40px;background:#f0a868;border-radius:0.5px;"></div>
<div class="a" style="left:479.20px;top:551.30px;width:2.60px;height:1.40px;background:#f0a868;border-radius:0.5px;"></div>
<div class="a" style="left:483.10px;top:551.30px;width:2.60px;height:1.40px;background:#f0a868;border-radius:0.5px;"></div>
<div class="a" style="left:487.00px;top:551.30px;width:2.60px;height:1.40px;background:#f0a868;border-radius:0.5px;"></div>
<div class="a" style="left:116.40px;top:310.90px;width:8.40px;height:16.80px;background:#e6e6e6;border-radius:1.2px;"></div>
<div class="a" style="left:119.90px;top:312.60px;width:1.40px;height:2.40px;background:#f0a868;border-radius:0.5px;"></div>
<div class="a" style="left:119.90px;top:316.50px;width:1.40px;height:2.40px;background:#f0a868;border-radius:0.5px;"></div>
<div class="a" style="left:119.90px;top:320.30px;width:1.40px;height:2.40px;background:#f0a868;border-radius:0.5px;"></div>
<div class="a" style="left:119.90px;top:324.20px;width:1.40px;height:2.40px;background:#f0a868;border-radius:0.5px;"></div>
<div class="a" style="left:858.90px;top:310.90px;width:8.40px;height:16.80px;background:#e6e6e6;border-radius:1.2px;"></div>
<div class="a" style="left:861.80px;top:312.60px;width:1.40px;height:2.40px;background:#f0a868;border-radius:0.5px;"></div>
<div class="a" style="left:861.80px;top:316.50px;width:1.40px;height:2.40px;background:#f0a868;border-radius:0.5px;"></div>
<div class="a" style="left:861.80px;top:320.30px;width:1.40px;height:2.40px;background:#f0a868;border-radius:0.5px;"></div>
<div class="a" style="left:861.80px;top:324.20px;width:1.40px;height:2.40px;background:#f0a868;border-radius:0.5px;"></div>
<svg class="a" style="left:116.00px;top:556.90px;" width="11" height="11" viewBox="0 0 12 12" fill="none" stroke="#444" stroke-width="0.85" stroke-linecap="round" stroke-linejoin="round"><circle cx="6.6" cy="5.4" r="3.6"/><path d="M3 9.6 L4.2 8.2 M1 3.4 L2.6 5.6 L4.6 4.2" /><path d="M2.4 9.2 H5" stroke-width="0.7"/></svg>
<svg class="a" style="left:128.50px;top:556.90px;" width="11" height="11" viewBox="0 0 12 12" fill="none" stroke="#c0c0c0" stroke-width="0.85" stroke-linecap="round" stroke-linejoin="round"><circle cx="5.4" cy="5.4" r="3.6"/><path d="M9 9.6 L7.8 8.2 M11 3.4 L9.4 5.6 L7.4 4.2"/></svg>
<svg class="a" style="left:141.00px;top:556.90px;" width="11" height="11" viewBox="0 0 12 12" fill="none" stroke="#444" stroke-width="0.85" stroke-linecap="round" stroke-linejoin="round"><circle cx="5.4" cy="5.2" r="3.8"/><path d="M8.2 8 L10.8 10.6" stroke-width="1.2"/><circle cx="5.4" cy="5.2" r="1.3" fill="#444" stroke="none"/></svg>
<div class="a" style="left:154.10px;top:557.50px;width:0.80px;height:10.00px;background:#d9d9d9;border-radius:0px;"></div>
<svg class="a" style="left:156.50px;top:556.90px;" width="11" height="11" viewBox="0 0 12 12" fill="none" stroke="#444" stroke-width="0.85" stroke-linecap="round" stroke-linejoin="round"><ellipse cx="6" cy="5" rx="3.9" ry="2.5" stroke-width="1"/><path d="M6 7.6 V9.4 M4.6 8 L6 9.4 L7.4 8" stroke-width="0.9"/><path d="M3.6 5 Q6 6.6 8.4 5" stroke-width="0.6"/></svg>
<svg class="a" style="left:169.10px;top:556.90px;" width="11" height="11" viewBox="0 0 12 12" fill="none" stroke="#444" stroke-width="0.85" stroke-linecap="round" stroke-linejoin="round"><circle cx="6" cy="3.2" r="0.8" fill="#444" stroke="none"/><path d="M6 4.4 V7 M6 7 L4.8 9.6 M6 7 L7.4 9.6 M4.4 5.4 L6 4.8 L7.6 6" stroke-width="0.85"/></svg>
<div class="a" style="left:181.60px;top:557.50px;width:0.80px;height:10.00px;background:#d9d9d9;border-radius:0px;"></div>
<svg class="a" style="left:184.10px;top:556.90px;" width="11" height="11" viewBox="0 0 12 12" fill="none" stroke="#444" stroke-width="0.85" stroke-linecap="round" stroke-linejoin="round"><circle cx="5.4" cy="5.2" r="3.9"/><path d="M8.2 8 L10.8 10.6" stroke-width="1.2"/><path d="M3.4 3.2 L7.4 7.2 M7.4 3.2 L3.4 7.2 M3.4 4.4 V3.2 H4.6 M7.4 6 V7.2 H6.2 M6.2 3.2 H7.4 V4.4 M3.4 6 V7.2 H4.6" stroke-width="0.6"/></svg>
<div class="a t" style="left:200.90px;top:558.46px;height:8.28px;line-height:8.28px;font-size:6.9px;color:#adadad;font-weight:normal;transform:scaleX(0.9043);transform-origin:left center;">keine Daten</div>
<svg class="a" style="left:236.70px;top:559.70px" width="6" height="6" viewBox="0 0 6 6" fill="none" stroke="#b0b0b0" stroke-width="1.15" stroke-linecap="round" stroke-linejoin="round"><path d="M2.208 1.56 L3.792 3 L2.208 4.4399999999999995"/></svg>
<div class="a" style="left:244.30px;top:557.50px;width:0.80px;height:10.00px;background:#d9d9d9;border-radius:0px;"></div>
<svg class="a" style="left:247.00px;top:556.90px;" width="11" height="11" viewBox="0 0 12 12" fill="none" stroke="#b4b4b4" stroke-width="0.85" stroke-linecap="round" stroke-linejoin="round"><path d="M1.8 6.6 Q3 3.2 5.6 3.8 Q8.2 4.6 7 7 L8.2 9.4 M7 7 Q9 6.4 9.8 4.8" /></svg>
<div class="a t" style="left:263.00px;top:558.46px;height:8.28px;line-height:8.28px;font-size:6.9px;color:#adadad;font-weight:normal;transform:scaleX(0.9178);transform-origin:left center;">keine Daten</div>
<svg class="a" style="left:298.80px;top:559.70px" width="6" height="6" viewBox="0 0 6 6" fill="none" stroke="#b0b0b0" stroke-width="1.15" stroke-linecap="round" stroke-linejoin="round"><path d="M2.208 1.56 L3.792 3 L2.208 4.4399999999999995"/></svg>
<div class="a" style="left:305.90px;top:557.50px;width:0.80px;height:10.00px;background:#d9d9d9;border-radius:0px;"></div>
<svg class="a" style="left:310.60px;top:560.40px;" width="9" height="4.4" viewBox="0 0 9 4.4"><rect x="0.5" y="0.5" width="8" height="3.2" rx="0.6" fill="none" stroke="#333" stroke-width="0.85"/><path d="M2.5 2.4 V3.6 M4.5 2.4 V3.6 M6.5 2.4 V3.6" stroke="#333" stroke-width="0.6"/></svg>
<div class="a t" style="left:335.20px;top:558.82px;height:7.56px;line-height:7.56px;font-size:6.3px;color:#1e1e1e;font-weight:normal;transform:scaleX(0.9007);transform-origin:left center;text-shadow:0 0 0.25px rgba(0,0,0,0.7);">1:100</div>
<svg class="a" style="left:361.00px;top:559.60px" width="6" height="6" viewBox="0 0 6 6" fill="none" stroke="#1e1e1e" stroke-width="1.15" stroke-linecap="round" stroke-linejoin="round"><path d="M2.208 1.56 L3.792 3 L2.208 4.4399999999999995"/></svg>
<div class="a" style="left:369.10px;top:557.50px;width:0.80px;height:10.00px;background:#d9d9d9;border-radius:0px;"></div>
<svg class="a" style="left:372.70px;top:558.60px;" width="9" height="8" viewBox="0 0 9 8"><path d="M0.6 3.2 L2.8 1 H8.4 L6.2 3.2 Z M0.6 3.2 V7 H6.2 V3.2 M6.2 7 L8.4 4.8 V1 M0.6 5.1 H6.2" fill="none" stroke="#444" stroke-width="0.7"/></svg>
<div class="a t" style="left:387.00px;top:558.82px;height:7.56px;line-height:7.56px;font-size:6.3px;color:#1e1e1e;font-weight:normal;transform:scaleX(0.9594);transform-origin:left center;text-shadow:0 0 0.25px rgba(0,0,0,0.7);">70 - 3D Ge...</div>
<svg class="a" style="left:423.60px;top:559.60px" width="6" height="6" viewBox="0 0 6 6" fill="none" stroke="#1e1e1e" stroke-width="1.15" stroke-linecap="round" stroke-linejoin="round"><path d="M2.208 1.56 L3.792 3 L2.208 4.4399999999999995"/></svg>
<div class="a" style="left:431.20px;top:557.50px;width:0.80px;height:10.00px;background:#d9d9d9;border-radius:0px;"></div>
<svg class="a" style="left:435.60px;top:559.20px;" width="9" height="7" viewBox="0 0 9 7"><rect x="0.5" y="0.5" width="8" height="6" rx="0.6" fill="#555" stroke="#333" stroke-width="0.7"/><path d="M1.6 4.6 L2.6 3 L3.6 4.6 L4.6 3 L5.6 4.6 L6.6 3 L7.6 4.6" fill="none" stroke="#eee" stroke-width="0.6"/><path d="M2 1.6 H3 M4 1.6 H5 M6 1.6 H7" stroke="#eee" stroke-width="0.6"/></svg>
<div class="a t" style="left:449.60px;top:558.82px;height:7.56px;line-height:7.56px;font-size:6.3px;color:#1e1e1e;font-weight:normal;transform:scaleX(0.9547);transform-origin:left center;text-shadow:0 0 0.25px rgba(0,0,0,0.7);">Komplettes...</div>
<svg class="a" style="left:486.20px;top:559.60px" width="6" height="6" viewBox="0 0 6 6" fill="none" stroke="#1e1e1e" stroke-width="1.15" stroke-linecap="round" stroke-linejoin="round"><path d="M2.208 1.56 L3.792 3 L2.208 4.4399999999999995"/></svg>
<div class="a" style="left:494.30px;top:557.50px;width:0.80px;height:10.00px;background:#d9d9d9;border-radius:0px;"></div>
<svg class="a" style="left:496.20px;top:556.90px;" width="11" height="11" viewBox="0 0 12 12" fill="none" stroke="#333" stroke-width="0.85" stroke-linecap="round" stroke-linejoin="round"><path d="M4 1.6 V6.4 Q4 8.2 6 8.2 Q8 8.2 8 6.4 V1.6 M6 8.2 V10.8" stroke-width="0.9"/></svg>
<div class="a t" style="left:512.00px;top:558.82px;height:7.56px;line-height:7.56px;font-size:6.3px;color:#1e1e1e;font-weight:normal;transform:scaleX(0.9419);transform-origin:left center;text-shadow:0 0 0.25px rgba(0,0,0,0.7);">04 S/W 1:2...</div>
<svg class="a" style="left:548.40px;top:559.60px" width="6" height="6" viewBox="0 0 6 6" fill="none" stroke="#1e1e1e" stroke-width="1.15" stroke-linecap="round" stroke-linejoin="round"><path d="M2.208 1.56 L3.792 3 L2.208 4.4399999999999995"/></svg>
<div class="a" style="left:556.70px;top:557.50px;width:0.80px;height:10.00px;background:#d9d9d9;border-radius:0px;"></div>
<svg class="a" style="left:560.00px;top:559.20px;" width="9" height="7" viewBox="0 0 9 7"><rect x="0.5" y="0.5" width="8" height="6" rx="1.2" fill="none" stroke="#444" stroke-width="0.8"/><rect x="2.2" y="2" width="4.6" height="3" fill="none" stroke="#444" stroke-width="0.7"/></svg>
<div class="a t" style="left:574.40px;top:558.82px;height:7.56px;line-height:7.56px;font-size:6.3px;color:#1e1e1e;font-weight:normal;transform:scaleX(0.9378);transform-origin:left center;text-shadow:0 0 0.25px rgba(0,0,0,0.7);">40 Genehm...</div>
<svg class="a" style="left:611.00px;top:559.60px" width="6" height="6" viewBox="0 0 6 6" fill="none" stroke="#1e1e1e" stroke-width="1.15" stroke-linecap="round" stroke-linejoin="round"><path d="M2.208 1.56 L3.792 3 L2.208 4.4399999999999995"/></svg>
<div class="a" style="left:619.10px;top:557.50px;width:0.80px;height:10.00px;background:#d9d9d9;border-radius:0px;"></div>
<svg class="a" style="left:621.50px;top:556.90px;" width="11" height="11" viewBox="0 0 12 12" fill="none" stroke="#444" stroke-width="0.85" stroke-linecap="round" stroke-linejoin="round"><path d="M2.8 4.8 Q1.2 4.8 1.4 3.4 Q1.6 2.2 3 2.4 Q3.6 1.2 5 1.6 Q6.2 2 6.2 3.2 M2.8 4.8 V7.6 H4.8 M5.6 4.6 H10 V10.4 H5.6 Z M6.6 6.4 H9 M6.6 8.2 H9 M7.4 3.4 V4.6"/></svg>
<div class="a t" style="left:636.50px;top:558.82px;height:7.56px;line-height:7.56px;font-size:6.3px;color:#1e1e1e;font-weight:normal;transform:scaleX(0.9637);transform-origin:left center;text-shadow:0 0 0.25px rgba(0,0,0,0.7);">Keine Über...</div>
<svg class="a" style="left:673.10px;top:559.60px" width="6" height="6" viewBox="0 0 6 6" fill="none" stroke="#1e1e1e" stroke-width="1.15" stroke-linecap="round" stroke-linejoin="round"><path d="M2.208 1.56 L3.792 3 L2.208 4.4399999999999995"/></svg>
<div class="a" style="left:681.20px;top:557.50px;width:0.80px;height:10.00px;background:#d9d9d9;border-radius:0px;"></div>
<svg class="a" style="left:684.10px;top:556.90px;" width="11" height="11" viewBox="0 0 12 12" fill="none" stroke="#444" stroke-width="0.85" stroke-linecap="round" stroke-linejoin="round"><path d="M1.4 9.4 L6.4 2 L7.6 7.4 Z M7.6 7.4 L10.4 9 H3 M6.4 2 V0.8"/></svg>
<div class="a t" style="left:699.10px;top:558.82px;height:7.56px;line-height:7.56px;font-size:6.3px;color:#1e1e1e;font-weight:normal;transform:scaleX(0.8722);transform-origin:left center;text-shadow:0 0 0.25px rgba(0,0,0,0.7);">00 Reiner N...</div>
<svg class="a" style="left:735.50px;top:559.60px" width="6" height="6" viewBox="0 0 6 6" fill="none" stroke="#1e1e1e" stroke-width="1.15" stroke-linecap="round" stroke-linejoin="round"><path d="M2.208 1.56 L3.792 3 L2.208 4.4399999999999995"/></svg>
<div class="a" style="left:743.80px;top:557.50px;width:0.80px;height:10.00px;background:#d9d9d9;border-radius:0px;"></div>
<svg class="a" style="left:746.30px;top:556.90px;" width="11" height="11" viewBox="0 0 12 12" fill="none" stroke="#555" stroke-width="0.85" stroke-linecap="round" stroke-linejoin="round"><path d="M1.2 7 L3.4 3.6 L6.4 2.6 L9.6 4.4 L10.8 7.6 L8 9.6 H3.4 Z M3.4 3.6 L5 6.4 L9.6 4.4 M5 6.4 L3.4 9.6 M1.2 7 L5 6.4" stroke-width="0.7" fill="#bbb"/></svg>
<div class="a t" style="left:761.80px;top:558.82px;height:7.56px;line-height:7.56px;font-size:6.3px;color:#1e1e1e;font-weight:normal;transform:scaleX(0.9339);transform-origin:left center;text-shadow:0 0 0.25px rgba(0,0,0,0.7);">Ohne Dacht...</div>
<svg class="a" style="left:798.00px;top:559.60px" width="6" height="6" viewBox="0 0 6 6" fill="none" stroke="#1e1e1e" stroke-width="1.15" stroke-linecap="round" stroke-linejoin="round"><path d="M2.208 1.56 L3.792 3 L2.208 4.4399999999999995"/></svg>
<div class="a" style="left:806.50px;top:557.50px;width:0.80px;height:10.00px;background:#d9d9d9;border-radius:0px;"></div>
<svg class="a" style="left:808.90px;top:556.90px;" width="11" height="11" viewBox="0 0 12 12" fill="none" stroke="#444" stroke-width="0.85" stroke-linecap="round" stroke-linejoin="round"><path d="M2 5.4 L5.6 2.4 L10 3.6 L9.4 7 L5.8 9.8 L2 8.6 Z M5.6 2.4 L5.8 6 L9.4 7 M5.8 6 L2 8.6" stroke-width="0.75"/></svg>
<div class="a t" style="left:824.00px;top:558.82px;height:7.56px;line-height:7.56px;font-size:6.3px;color:#1e1e1e;font-weight:normal;transform:scaleX(0.9563);transform-origin:left center;text-shadow:0 0 0.25px rgba(0,0,0,0.7);">Schattierun...</div>
<svg class="a" style="left:860.20px;top:559.60px" width="6" height="6" viewBox="0 0 6 6" fill="none" stroke="#1e1e1e" stroke-width="1.15" stroke-linecap="round" stroke-linejoin="round"><path d="M2.208 1.56 L3.792 3 L2.208 4.4399999999999995"/></svg>
<div class="a t" style="left:34.20px;top:568.87px;height:7.66px;line-height:7.66px;font-size:6.38px;color:#2b2b2b;font-weight:normal;transform:scaleX(1.0003);transform-origin:left center;">Klicken Sie mit dem Cursor auf ein Element oder ziehen Sie einen Auswahlbereich auf. Drücken Sie für Morphbearbeitung Strg/Ctrl+Umsch, um zwischen Element-/Unterelement-Auswahl zu wechseln.</div>
<div class="a" style="left:689.50px;top:137.50px;width:160.00px;height:232.50px;background:#e0e0df;border-radius:3.4px;box-shadow:0 0 0 0.4px rgba(0,0,0,.10),0 2.5px 8px rgba(0,0,0,.2);"></div>
<svg class="a" style="left:696.00px;top:140.60px;" width="12" height="12" viewBox="0 0 12 12" fill="none" stroke="#444" stroke-width="0.85" stroke-linecap="round" stroke-linejoin="round"><path d="M1.6 4.4 L4.6 2 L7.4 3.6 V7.4 L4.4 9.6 L1.6 7.8 Z M4.6 2 V0.8 M5.8 1.4 L4.6 0.6 L3.4 1.4" stroke="#444"/><rect x="5.6" y="5.6" width="5.2" height="5.2" rx="1" fill="#4a90f5" stroke="none"/><path d="M7 9.4 V7.4 M8.2 9.4 V7 M9.4 9.4 V7.8" stroke="#fff" stroke-width="0.6"/></svg>
<div class="a t" style="left:710.30px;top:143.19px;height:8.82px;line-height:8.82px;font-size:7.35px;color:#262626;font-weight:normal;text-shadow:0 0 0.2px rgba(0,0,0,.4);">3D-Stile</div>
<svg class="a" style="left:836.60px;top:143.70px" width="6" height="6" viewBox="0 0 6 6" fill="none" stroke="#222" stroke-width="1.1" stroke-linecap="round" stroke-linejoin="round"><path d="M1.9 1.0 L4.1 3 L1.9 5.0"/></svg>
<div class="a" style="left:697.20px;top:156.20px;width:144.40px;height:0.80px;background:#cbcbcb;border-radius:0px;"></div>
<svg class="a" style="left:696.00px;top:160.20px;" width="12" height="12" viewBox="0 0 12 12" fill="none" stroke="#555" stroke-width="0.85" stroke-linecap="round" stroke-linejoin="round"><rect x="1" y="3" width="10" height="7.4" rx="1.4"/><circle cx="6" cy="6.8" r="2.3"/><path d="M4 3 L4.6 1.8 H7.4 L8 3"/></svg>
<div class="a t" style="left:710.30px;top:162.69px;height:8.82px;line-height:8.82px;font-size:7.35px;color:#262626;font-weight:normal;text-shadow:0 0 0.2px rgba(0,0,0,.4);">Photorealistische Darstellung</div>
<svg class="a" style="left:827.00px;top:163.90px;" width="5.6" height="5.6" viewBox="0 0 5.6 5.6"><path d="M0.2 0.9 H1.7 L3.9 4.9 H5.4 M3.5 0.9 H5.4" fill="none" stroke="#b3b3b3" stroke-width="0.7"/></svg>
<div class="a t" style="left:834.60px;top:163.88px;height:6.24px;line-height:6.24px;font-size:5.2px;color:#b3b3b3;font-weight:normal;transform:scaleX(1.0490);transform-origin:left center;">F10</div>
<div class="a" style="left:697.20px;top:175.20px;width:144.40px;height:0.80px;background:#cbcbcb;border-radius:0px;"></div>
<svg class="a" style="left:696.00px;top:178.80px;" width="12" height="12" viewBox="0 0 12 12" fill="none" stroke="#444" stroke-width="0.85" stroke-linecap="round" stroke-linejoin="round"><circle cx="6" cy="1.8" r="0.9"/><path d="M6 3 V6.4 M4.6 4 H7.4 M6 6.4 L4.6 8.6 M6 6.4 L7.4 8.6"/><path d="M2 7.6 Q1 9 3 9.8 Q6 10.8 9.4 9.8 M9.4 9.8 L8.4 8.8 M9.4 9.8 L8.4 10.8" stroke-width="0.8"/><circle cx="10.4" cy="9" r="0.9" fill="#4a90f5" stroke="none"/></svg>
<div class="a t" style="left:710.30px;top:181.49px;height:8.82px;line-height:8.82px;font-size:7.35px;color:#262626;font-weight:normal;text-shadow:0 0 0.2px rgba(0,0,0,.4);">Standort &amp; Projektionsart...</div>
<svg class="a" style="left:820.60px;top:182.20px;" width="5.6" height="5.6" viewBox="0 0 5.6 5.6"><path d="M0.2 0.9 H1.7 L3.9 4.9 H5.4 M3.5 0.9 H5.4" fill="none" stroke="#b3b3b3" stroke-width="0.7"/></svg>
<svg class="a" style="left:826.70px;top:182.10px;" width="5.8" height="5.8" viewBox="0 0 5.8 5.8"><path d="M1.9 1.9 H3.9 V3.9 H1.9 Z M1.9 1.9 V1.1 A0.8 0.8 0 1 0 1.1 1.9 H1.9 M3.9 1.9 H4.7 A0.8 0.8 0 1 0 3.9 1.1 V1.9 M3.9 3.9 V4.7 A0.8 0.8 0 1 0 4.7 3.9 H3.9 M1.9 3.9 H1.1 A0.8 0.8 0 1 0 1.9 4.7 V3.9" fill="none" stroke="#b3b3b3" stroke-width="0.6"/></svg>
<div class="a t" style="left:835.20px;top:180.82px;height:8.76px;line-height:8.76px;font-size:7.3px;color:#b3b3b3;font-weight:normal;">3</div>
<div class="a t" style="left:697.20px;top:194.09px;height:8.82px;line-height:8.82px;font-size:7.35px;color:#262626;font-weight:normal;text-shadow:0 0 0.2px rgba(0,0,0,.4);">Fenstergröße einstellen...</div>
<div class="a" style="left:697.20px;top:206.00px;width:144.40px;height:0.80px;background:#cbcbcb;border-radius:0px;"></div>
<svg class="a" style="left:696.00px;top:209.60px;" width="12" height="12" viewBox="0 0 12 12" fill="none" stroke="#444" stroke-width="0.85" stroke-linecap="round" stroke-linejoin="round"><path d="M1 6 H3.6 V10.6 H10.6 V7.4" stroke="#444"/><path d="M1 10.6 V6 M1 10.6 H3.6 M2 8.2 L5 9.6" stroke="#444"/><circle cx="8" cy="4" r="3" stroke="#4a90f5"/><path d="M7.2 2.6 L9.4 4 L7.2 5.4 Z" fill="#4a90f5" stroke="none"/></svg>
<div class="a t" style="left:710.30px;top:212.29px;height:8.82px;line-height:8.82px;font-size:7.35px;color:#262626;font-weight:normal;text-shadow:0 0 0.2px rgba(0,0,0,.4);">Neues 3D-Dokument aus 3D...</div>
<div class="a t" style="left:697.20px;top:224.89px;height:8.82px;line-height:8.82px;font-size:7.35px;color:#262626;font-weight:normal;text-shadow:0 0 0.2px rgba(0,0,0,.4);">3D-Dokument neu definieren...</div>
<div class="a" style="left:697.20px;top:237.40px;width:144.40px;height:0.80px;background:#cbcbcb;border-radius:0px;"></div>
<svg class="a" style="left:696.00px;top:240.40px;" width="12" height="12" viewBox="0 0 12 12" fill="none" stroke="#444" stroke-width="0.85" stroke-linecap="round" stroke-linejoin="round"><circle cx="3.6" cy="3.6" r="2.6" stroke="#bbb"/><path d="M4 5 H6 V7 H4 Z M7 5 H9 V7 H7 Z M5.6 8 H7.6 V10 H5.6 Z" fill="#333" stroke="none"/></svg>
<div class="a t" style="left:710.30px;top:243.29px;height:8.82px;line-height:8.82px;font-size:7.35px;color:#262626;font-weight:normal;text-shadow:0 0 0.2px rgba(0,0,0,.4);">Auswahl anzeigen</div>
<svg class="a" style="left:826.90px;top:243.90px;" width="5.8" height="6" viewBox="0 0 5.8 6"><path d="M2.9 0.5 L5.4 3.2 H4.1 V5.4 H1.7 V3.2 H0.4 Z" fill="none" stroke="#b3b3b3" stroke-width="0.7" stroke-linejoin="round"/></svg>
<div class="a t" style="left:835.20px;top:242.82px;height:8.76px;line-height:8.76px;font-size:7.3px;color:#b3b3b3;font-weight:normal;">4</div>
<div class="a" style="left:692.10px;top:254.10px;width:155.00px;height:11.70px;background:#3c8bf7;border-radius:2.2px;"></div>
<svg class="a" style="left:696.00px;top:253.80px;" width="12" height="12" viewBox="0 0 12 12" fill="none" stroke="#fff" stroke-width="0.75" stroke-linecap="round" stroke-linejoin="round"><path d="M1.4 3.4 L4 1.6 L6.6 3 V6 L4 7.6 L1.4 6.2 Z M4 4.6 V7.6 M1.4 3.4 L4 4.6 L6.6 3"/><path d="M5.4 6.6 L8 5 L10.6 6.4 V9.2 L8 10.8 L5.4 9.4 Z M8 7.8 V10.8 M5.4 6.6 L8 7.8 L10.6 6.4"/></svg>
<div class="a t" style="left:710.30px;top:256.29px;height:8.82px;line-height:8.82px;font-size:7.35px;color:#ffffff;font-weight:normal;text-shadow:0 0 0.2px rgba(255,255,255,.6);">Alle anzeigen</div>
<svg class="a" style="left:826.90px;top:256.80px;" width="5.8" height="6" viewBox="0 0 5.8 6"><path d="M2.9 0.5 L5.4 3.2 H4.1 V5.4 H1.7 V3.2 H0.4 Z" fill="none" stroke="#fff" stroke-width="0.8" stroke-linejoin="round"/></svg>
<div class="a t" style="left:835.20px;top:255.72px;height:8.76px;line-height:8.76px;font-size:7.3px;color:#fff;font-weight:normal;text-shadow:0 0 0.25px #fff;">3</div>
<svg class="a" style="left:686.00px;top:248.00px;" width="170" height="24" viewBox="0 0 170 24"><path d="M2.90 3.29 L7.10 3.35 L11.30 2.11 L15.50 3.12 L19.70 3.32 L23.90 2.86 L28.10 3.58 L32.30 2.50 L36.50 2.47 L40.70 3.61 L44.90 2.88 L49.10 3.27 L53.30 3.14 L57.50 2.11 L61.70 3.34 L65.90 3.33 L70.10 2.85 L74.30 3.45 L78.50 2.36 L82.70 2.68 L86.90 3.71 L91.10 2.83 L95.30 3.22 L99.50 2.96 L103.70 2.19 L107.90 3.55 L112.10 3.29 L116.30 2.79 L120.50 3.32 L124.70 2.30 L128.90 2.92 L133.10 3.76 L137.30 2.72 L141.50 3.15 L145.70 2.83 L149.90 2.35 L154.10 3.73 L158.30 3.18 L162.50 2.71 L166.35 3.00 L165.72 6.80 L166.31 10.60 L166.72 14.40 L165.91 18.20 L166.20 21.49 L162.00 21.17 L157.80 20.94 L153.60 22.25 L149.40 21.40 L145.20 21.04 L141.00 21.57 L136.80 20.80 L132.60 21.78 L128.40 22.04 L124.20 20.83 L120.00 21.48 L115.80 21.17 L111.60 21.15 L107.40 22.30 L103.20 21.19 L99.00 21.01 L94.80 21.57 L90.60 20.92 L86.40 21.94 L82.20 21.86 L78.00 20.70 L73.80 21.52 L69.60 21.22 L65.40 21.33 L61.20 22.25 L57.00 20.96 L52.80 21.03 L48.60 21.63 L44.40 21.04 L40.20 22.03 L36.00 21.63 L31.80 20.62 L27.60 21.61 L23.40 21.29 L19.20 21.47 L15.00 22.13 L10.80 20.76 L6.60 21.11 L3.11 21.40 L2.72 17.60 L3.35 13.80 L2.89 10.00 L2.34 6.20 Z" fill="none" stroke="#f43ee4" stroke-width="1.45" stroke-linejoin="round"/></svg>
<svg class="a" style="left:696.00px;top:272.60px;" width="12" height="12" viewBox="0 0 12 12" fill="none" stroke="#444" stroke-width="0.85" stroke-linecap="round" stroke-linejoin="round"><path d="M1 10.4 V6.4 L3 5.4 V6.4 L5 5.4 V6.4 L7 5.4 V6.4 H11 V10.4 Z" fill="#444" stroke="#444" stroke-width="0.5"/><path d="M2 4.4 V2.4 H3.2 V4 M8.6 4.8 L9.4 2 L10.2 4.8" stroke-width="0.7"/><path d="M2 8 H10 M2 9.4 H10" stroke="#ddd" stroke-width="0.5" stroke-dasharray="0.8 0.6"/></svg>
<div class="a t" style="left:710.30px;top:275.39px;height:8.82px;line-height:8.82px;font-size:7.35px;color:#262626;font-weight:normal;text-shadow:0 0 0.2px rgba(0,0,0,.4);">Neu aufbauen</div>
<svg class="a" style="left:826.90px;top:276.30px;" width="5.8" height="5.8" viewBox="0 0 5.8 5.8"><path d="M1.9 1.9 H3.9 V3.9 H1.9 Z M1.9 1.9 V1.1 A0.8 0.8 0 1 0 1.1 1.9 H1.9 M3.9 1.9 H4.7 A0.8 0.8 0 1 0 3.9 1.1 V1.9 M3.9 3.9 V4.7 A0.8 0.8 0 1 0 4.7 3.9 H3.9 M1.9 3.9 H1.1 A0.8 0.8 0 1 0 1.9 4.7 V3.9" fill="none" stroke="#b3b3b3" stroke-width="0.6"/></svg>
<div class="a t" style="left:835.00px;top:275.02px;height:8.76px;line-height:8.76px;font-size:7.3px;color:#b3b3b3;font-weight:normal;transform:scaleX(0.8915);transform-origin:left center;">R</div>
<div class="a" style="left:697.20px;top:288.30px;width:144.40px;height:0.80px;background:#cbcbcb;border-radius:0px;"></div>
<svg class="a" style="left:696.00px;top:291.80px;" width="12" height="12" viewBox="0 0 12 12" fill="none" stroke="#444" stroke-width="0.85" stroke-linecap="round" stroke-linejoin="round"><circle cx="5" cy="4.8" r="3.8"/><path d="M7.8 7.8 L11 11" stroke-width="1.2"/><path d="M3.2 3 L6.8 6.6 M6.8 3 L3.2 6.6 M3.2 4.2 V3 H4.4 M6.8 5.4 V6.6 H5.6 M5.6 3 H6.8 V4.2 M3.2 5.4 V6.6 H4.4" stroke-width="0.55"/></svg>
<div class="a t" style="left:710.30px;top:294.49px;height:8.82px;line-height:8.82px;font-size:7.35px;color:#262626;font-weight:normal;text-shadow:0 0 0.2px rgba(0,0,0,.4);">Optimieren</div>
<svg class="a" style="left:826.90px;top:295.10px;" width="5.8" height="5.8" viewBox="0 0 5.8 5.8"><path d="M1.9 1.9 H3.9 V3.9 H1.9 Z M1.9 1.9 V1.1 A0.8 0.8 0 1 0 1.1 1.9 H1.9 M3.9 1.9 H4.7 A0.8 0.8 0 1 0 3.9 1.1 V1.9 M3.9 3.9 V4.7 A0.8 0.8 0 1 0 4.7 3.9 H3.9 M1.9 3.9 H1.1 A0.8 0.8 0 1 0 1.9 4.7 V3.9" fill="none" stroke="#b3b3b3" stroke-width="0.6"/></svg>
<div class="a t" style="left:835.00px;top:293.82px;height:8.76px;line-height:8.76px;font-size:7.3px;color:#b3b3b3;font-weight:normal;transform:scaleX(0.8454);transform-origin:left center;">O</div>
<svg class="a" style="left:696.00px;top:304.80px;" width="12" height="12" viewBox="0 0 12 12" fill="none" stroke="#444" stroke-width="0.85" stroke-linecap="round" stroke-linejoin="round"><ellipse cx="6" cy="5" rx="4.6" ry="3" stroke="#444"/><ellipse cx="6" cy="5" rx="2" ry="3" stroke="#444" stroke-width="0.6"/><path d="M6 8 V11.4 M4.4 9.6 L6 11.2 L7.6 9.6" stroke="#4a90f5" stroke-width="1"/></svg>
<div class="a t" style="left:710.30px;top:307.59px;height:8.82px;line-height:8.82px;font-size:7.35px;color:#262626;font-weight:normal;text-shadow:0 0 0.2px rgba(0,0,0,.4);">Orbit</div>
<div class="a t" style="left:840.60px;top:308.40px;height:6.00px;line-height:6.00px;font-size:5px;color:#b3b3b3;font-weight:normal;transform:translateX(-100%);">F2</div>
<svg class="a" style="left:696.00px;top:318.00px;" width="12" height="12" viewBox="0 0 12 12" fill="none" stroke="#444" stroke-width="0.85" stroke-linecap="round" stroke-linejoin="round"><path d="M3.4 3.6 L6 2.2 L8.6 3.6 V8.4 L6 9.8 L3.4 8.4 Z M6 2.2 V9.8" stroke="#666" stroke-width="0.7"/><path d="M0.6 6 H2.4 M9.6 6 H11.4" stroke="#666" stroke-width="0.7"/><circle cx="0.8" cy="6" r="0.5" fill="#666"/><circle cx="11.2" cy="6" r="0.5" fill="#666"/></svg>
<div class="a t" style="left:710.30px;top:320.69px;height:8.82px;line-height:8.82px;font-size:7.35px;color:#262626;font-weight:normal;text-shadow:0 0 0.2px rgba(0,0,0,.4);">Zwei-Punkt-Perspektive</div>
<div class="a" style="left:697.20px;top:333.10px;width:144.40px;height:0.80px;background:#cbcbcb;border-radius:0px;"></div>
<div class="a t" style="left:697.20px;top:338.89px;height:8.82px;line-height:8.82px;font-size:7.35px;color:#262626;font-weight:normal;text-shadow:0 0 0.2px rgba(0,0,0,.4);">Gehe zu</div>
<svg class="a" style="left:836.60px;top:339.40px" width="6" height="6" viewBox="0 0 6 6" fill="none" stroke="#222" stroke-width="1.1" stroke-linecap="round" stroke-linejoin="round"><path d="M1.9 1.0 L4.1 3 L1.9 5.0"/></svg>
<div class="a" style="left:697.20px;top:350.90px;width:144.40px;height:0.80px;background:#cbcbcb;border-radius:0px;"></div>
<svg class="a" style="left:696.00px;top:354.60px;" width="12" height="12" viewBox="0 0 12 12" fill="none" stroke="#444" stroke-width="0.85" stroke-linecap="round" stroke-linejoin="round"><path d="M6.2 1.4 L1.8 6.6 L3.4 10.8 H10.4 L9.2 7.4 Z" stroke="#4a90f5" stroke-width="1" fill="#cfe0fb"/><path d="M6.2 2.4 L5 10 M6.2 2.4 L8 10 M3.4 7.6 L9 8.2" stroke="#8f9bb0" stroke-width="0.6"/></svg>
<div class="a t" style="left:710.30px;top:357.49px;height:8.82px;line-height:8.82px;font-size:7.35px;color:#262626;font-weight:normal;text-shadow:0 0 0.2px rgba(0,0,0,.4);">Bearbeitungsebene</div>
<svg class="a" style="left:836.60px;top:358.00px" width="6" height="6" viewBox="0 0 6 6" fill="none" stroke="#222" stroke-width="1.1" stroke-linecap="round" stroke-linejoin="round"><path d="M1.9 1.0 L4.1 3 L1.9 5.0"/></svg>
</div><div id="ring"></div></div>
</body></html>
